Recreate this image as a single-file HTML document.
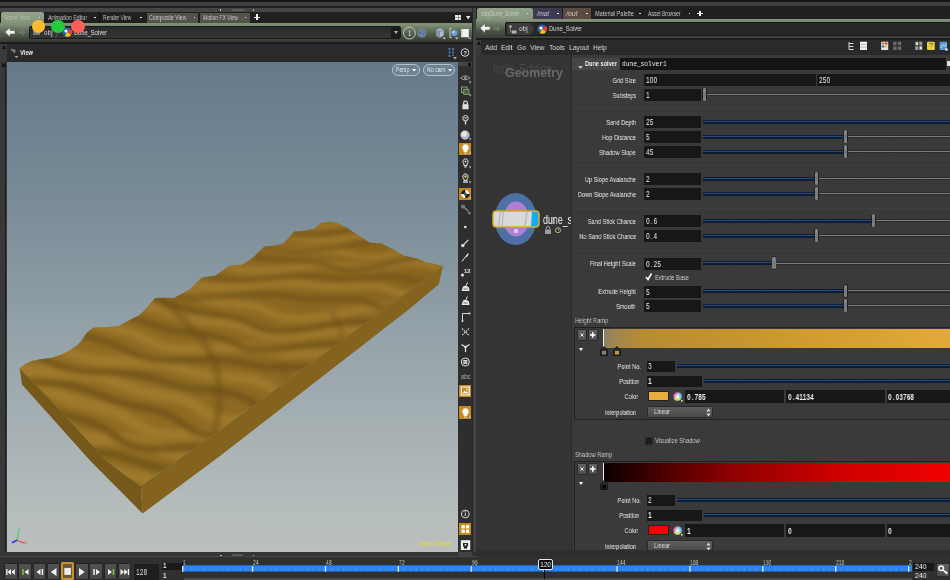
<!DOCTYPE html>
<html><head><meta charset="utf-8"><title>Houdini</title><style>
html,body{margin:0;padding:0;background:#2b2b2b;}
body{width:950px;height:580px;position:relative;overflow:hidden;font-family:"Liberation Sans",sans-serif;}
div{position:absolute;box-sizing:border-box;}
.t{position:absolute;white-space:nowrap;display:block;will-change:transform;}
svg{position:absolute;overflow:visible;}
</style></head><body>
<div style="left:0px;top:0px;width:950px;height:1.5px;background:#161616"></div>
<div style="left:0px;top:1.5px;width:950px;height:4px;background:#3e3e3e"></div>
<div style="left:0px;top:5.5px;width:950px;height:2px;background:#202020"></div>
<div style="left:0px;top:7.5px;width:472px;height:4px;background:#454545"></div>
<div style="left:0px;top:12px;width:472px;height:11px;background:#202020"></div>
<div style="left:1px;top:12px;width:42.5px;height:12px;background:linear-gradient(#95a48d,#82937a);border-radius:2px 2px 0 0"></div>
<span class="t" style="left:4.3px;transform-origin:0 50%;top:12.55px;font:normal 7.5px/9.5px 'Liberation Sans',sans-serif;color:#b4c0ae;transform:scaleX(0.659);">Scene View</span>
<div style="left:38.8px;top:16.6px;width:1.6px;height:1.6px;background:#e4e4e4"></div>
<span class="t" style="left:47.6px;transform-origin:0 50%;top:12.55px;font:normal 7.5px/9.5px 'Liberation Sans',sans-serif;color:#c4c4c4;transform:scaleX(0.711);">Animation Editor</span>
<div style="left:94.3px;top:16.6px;width:1.6px;height:1.6px;background:#e4e4e4"></div>
<div style="left:99px;top:12px;width:1px;height:11px;background:#0e0e0e"></div>
<span class="t" style="left:103.3px;transform-origin:0 50%;top:12.55px;font:normal 7.5px/9.5px 'Liberation Sans',sans-serif;color:#c4c4c4;transform:scaleX(0.657);">Render View</span>
<div style="left:140px;top:16.6px;width:1.6px;height:1.6px;background:#e4e4e4"></div>
<div style="left:146.8px;top:13px;width:51.4px;height:10px;background:#55524a"></div>
<span class="t" style="left:149.2px;transform-origin:0 50%;top:12.55px;font:normal 7.5px/9.5px 'Liberation Sans',sans-serif;color:#c9c9c4;transform:scaleX(0.692);">Composite View</span>
<div style="left:193.5px;top:16.6px;width:1.6px;height:1.6px;background:#e4e4e4"></div>
<div style="left:200px;top:13px;width:50px;height:10px;background:#55524a"></div>
<span class="t" style="left:202.5px;transform-origin:0 50%;top:12.55px;font:normal 7.5px/9.5px 'Liberation Sans',sans-serif;color:#c9c9c4;transform:scaleX(0.664);">Motion FX View</span>
<div style="left:244.7px;top:16.6px;width:1.6px;height:1.6px;background:#e4e4e4"></div>
<div style="left:254.4px;top:16.5px;width:5.6px;height:1.5px;background:#f2f2f2"></div>
<div style="left:256.45px;top:14.45px;width:1.5px;height:5.6px;background:#f2f2f2"></div>
<div style="left:232px;top:8.5px;width:11.5px;height:2px;background:#5a5a5a"></div>
<div style="left:219.5px;top:9px;width:1.5px;height:1.5px;background:#bbb"></div>
<div style="left:252.5px;top:9px;width:1.5px;height:1.5px;background:#bbb"></div>
<div style="left:455.3px;top:15px;width:5.5px;height:5.2px;background:#ececec"></div>
<div style="left:457.8px;top:15px;width:0.6px;height:5.2px;background:#999"></div>
<div style="left:455.3px;top:17.3px;width:5.5px;height:0.6px;background:#999"></div>
<svg style="left:465.800px;top:16px" width="4.400" height="3.400"><path d="M0 0H4.400L2.200 3.400Z" fill="#ececec"/></svg>
<div style="left:0px;top:23px;width:472px;height:3px;background:#7f9077"></div>
<div style="left:0px;top:25px;width:472px;height:17px;background:linear-gradient(#7c8d74,#566351 45%,#33392f)"></div>
<div style="left:29px;top:26px;width:372px;height:13px;background:linear-gradient(#2a2a2a,#363636);border:1px solid #1a1a1a;border-radius:2px"></div>
<div style="left:391px;top:27px;width:9px;height:11px;background:#1b1b1b"></div>
<svg style="left:394px;top:30.500px" width="4" height="3"><path d="M0 0H4L2 3Z" fill="#bbb"/></svg>
<svg style="left:4px;top:27px" width="12" height="11"><path d="M1 5L6 0.5V3.5H11V7H6V10Z" fill="#f2f2f2" stroke="#555" stroke-width=".5"/></svg>
<svg style="left:17px;top:28px" width="10" height="9"><path d="M9 4.5L5 1V3.3H1V5.8H5V8Z" fill="#6a7764"/></svg>
<div style="left:33px;top:29px;width:7px;height:6px;background:#9a9a9a;opacity:.7"></div>
<span class="t" style="left:44.3px;transform-origin:0 50%;top:27.799999999999997px;font:normal 8px/10px 'Liberation Sans',sans-serif;color:#d0d0d0;transform:scaleX(0.796);">obj</span>
<div style="left:57px;top:27px;width:1px;height:11px;background:#555;transform:skewX(-20deg)"></div>
<svg style="left:62px;top:27px" width="10" height="10"><circle cx="5" cy="5" r="4.6" fill="#2b5fa8"/><path d="M5 5L9 2A4.6 4.6 0 0 1 9 8Z" fill="#e8402a"/><path d="M5 5L9 8A4.6 4.6 0 0 1 3 9Z" fill="#f5c518"/><circle cx="4" cy="4" r="1.6" fill="#fff"/></svg>
<span class="t" style="left:73.5px;transform-origin:0 50%;top:27.799999999999997px;font:normal 8px/10px 'Liberation Sans',sans-serif;color:#e0e0e0;transform:scaleX(0.714);">Dune_Solver</span>
<svg style="left:400px;top:25px" width="72" height="16"><circle cx="9.400" cy="8.100" r="5.900" fill="none" stroke="#c3cbbd" stroke-width="1"/><path d="M8.600 6.600L9.700 5.600V10.600M8.500 10.600H10.900" stroke="#c3cbbd" stroke-width=".9" fill="none"/><circle cx="21.900" cy="8.200" r="4" fill="#58748f" stroke="#7893ad" stroke-width=".9"/><path d="M20.600 7A1.300 1.300 0 0 1 23.100 7.300L20.700 10.200H23.300" stroke="#7f9bb6" stroke-width=".8" fill="none"/><path d="M36 4.500L40.500 3.500L43.700 5V10.500L39.500 13L36 10.500Z" fill="#aebdcc"/><path d="M36 4.500L39.500 6.500L43.700 5M39.500 6.500V13" stroke="#5e6e7e" stroke-width=".7" fill="none"/><path d="M36 4.500L39.500 6.500V13L36 10.500Z" fill="#8597a8"/><path d="M42.500 12.500H46L44.250 14.500Z" fill="#c8c8c8"/><path d="M52 3.500H50V12.500H52" stroke="#b9c4a6" stroke-width="1.100" fill="none"/><circle cx="54.300" cy="8" r="3.100" fill="#6f9bd4"/><circle cx="53.500" cy="7" r="1.200" fill="#b9d4f4"/><path d="M55 12.500H58.500L56.750 14.500Z" fill="#c8c8c8"/><rect x="61.300" y="4" width="7.500" height="8.200" fill="#f2f2ee"/><rect x="61.300" y="4" width="1.200" height="8.200" fill="#cfcfc8"/><path d="M67.500 12.500H70.500L70.500 14.500Z" fill="#c8c8c8"/></svg>
<div style="left:0px;top:41.5px;width:472px;height:2px;background:#1c1c1c"></div>
<div style="left:0px;top:43.5px;width:472px;height:18px;background:#2a2a2a"></div>
<div style="left:0px;top:44px;width:7px;height:18px;background:#3a3a3a"></div>
<svg style="left:2px;top:45px" width="4" height="4"><path d="M0 4L2 0L4 4Z" fill="#111"/></svg>
<span class="t" style="left:20px;transform-origin:0 50%;top:48.3px;font:bold 8px/10px 'Liberation Sans',sans-serif;color:#f0f0f0;transform:scaleX(0.719);">View</span>
<svg style="left:10px;top:48px" width="9" height="10"><path d="M1 1L5 5M3 1.5L6 3" stroke="#7c8a94" stroke-width="1.2"/><path d="M4.5 8H8.5L6.5 10Z" fill="#aaa"/></svg>
<svg style="left:446px;top:46px" width="26" height="14"><path d="M3.5 2V12M7 2V10" stroke="#4f86c9" stroke-width="1.6" stroke-dasharray="2.2 1.2"/><path d="M7 11H11L9 13.5Z" fill="#aaa"/><circle cx="19" cy="6.5" r="3.8" fill="#1c1c1c" stroke="#ddd" stroke-width="1"/><text x="19" y="8.8" font-size="6" font-weight="bold" fill="#eee" text-anchor="middle" font-family="Liberation Sans">?</text></svg>
<div style="left:0px;top:61.5px;width:6.5px;height:491px;background:#383838"></div>
<div style="left:4.6px;top:61.5px;width:1.9px;height:490.5px;background:#1e1e1e"></div>
<svg style="left:2px;top:63px" width="4" height="5"><path d="M0 0L4 2.5L0 5Z" fill="#111"/></svg>
<div style="left:6.5px;top:61.5px;width:451.5px;height:490.5px;background:linear-gradient(#64798a 0%,#7b8d99 30%,#98a5ab 60%,#b4bcbc 90%,#babfbe 100%)"></div>
<div style="left:458px;top:62px;width:14px;height:491px;background:#2e2e2e"></div>
<div style="left:458px;top:62px;width:14px;height:4px;background:#444"></div>
<div style="left:468px;top:63px;width:3px;height:3px;background:#111"></div>
<div style="left:392px;top:64px;width:27.7px;height:12px;border:1px solid #b4c2c9;border-radius:6px;background:rgba(130,150,165,.3)"></div>
<span class="t" style="left:396.3px;transform-origin:0 50%;top:65.0px;font:normal 8px/10px 'Liberation Sans',sans-serif;color:#e6edf0;transform:scaleX(0.636);">Persp</span>
<svg style="left:411.9px;top:69.2px" width="4.200" height="2.600"><path d="M0 0H4.200L2.100 2.600Z" fill="#fff"/></svg>
<div style="left:423px;top:64px;width:32.4px;height:12px;border:1px solid #b4c2c9;border-radius:6px;background:rgba(130,150,165,.3)"></div>
<span class="t" style="left:427.3px;transform-origin:0 50%;top:65.0px;font:normal 8px/10px 'Liberation Sans',sans-serif;color:#e6edf0;transform:scaleX(0.653);">No cam</span>
<svg style="left:447.59999999999997px;top:69.2px" width="4.200" height="2.600"><path d="M0 0H4.200L2.100 2.600Z" fill="#fff"/></svg>
<svg style="left:0;top:0" width="475" height="560" viewBox="0 0 475 560">
<defs><clipPath id="ctop"><polygon points="19.7,368.6 25.0,364.0 32.4,360.7 42.0,359.0 51.0,358.0 60.0,355.0 66.0,352.4 77.0,345.5 82.0,340.0 86.9,332.4 93.8,327.6 107.6,326.9 118.6,326.2 128.3,320.7 139.3,315.2 146.2,308.3 155.2,297.9 162.8,297.7 173.8,297.9 183.4,293.1 190.0,289.2 201.8,277.4 215.3,275.8 229.5,265.5 242.1,264.7 253.2,257.6 264.2,246.6 273.7,245.8 283.2,243.4 294.2,231.6 305.3,230.8 314.7,228.4 321.0,222.9 330.5,221.6 336.9,222.9 347.2,228.1 359.3,235.9 369.7,242.8 381.7,243.6 393.8,249.7 404.1,255.7 416.2,258.3 426.6,262.6 433.4,263.8 442.9,266.0 219.3,430.5 193.4,449.0 159.0,473.0 140.9,486.0 124.5,474.8 107.0,461.0 90.0,443.0 50.0,399.5"/></clipPath>
<filter id="bl" x="-10%" y="-10%" width="120%" height="120%"><feGaussianBlur stdDeviation="2.6"/></filter>
<linearGradient id="gtopm" gradientUnits="userSpaceOnUse" x1="60" y1="420" x2="400" y2="250"><stop offset="0" stop-color="#916d25"/><stop offset="1" stop-color="#886520"/></linearGradient><linearGradient id="gside" x1="0" y1="0" x2="1" y2="0"><stop offset="0" stop-color="#7d5e1e"/><stop offset="1" stop-color="#8c6b22"/></linearGradient>
</defs>
<polygon points="19.7,368.6 25.0,364.0 32.4,360.7 42.0,359.0 51.0,358.0 60.0,355.0 66.0,352.4 77.0,345.5 82.0,340.0 86.9,332.4 93.8,327.6 107.6,326.9 118.6,326.2 128.3,320.7 139.3,315.2 146.2,308.3 155.2,297.9 162.8,297.7 173.8,297.9 183.4,293.1 190.0,289.2 201.8,277.4 215.3,275.8 229.5,265.5 242.1,264.7 253.2,257.6 264.2,246.6 273.7,245.8 283.2,243.4 294.2,231.6 305.3,230.8 314.7,228.4 321.0,222.9 330.5,221.6 336.9,222.9 347.2,228.1 359.3,235.9 369.7,242.8 381.7,243.6 393.8,249.7 404.1,255.7 416.2,258.3 426.6,262.6 433.4,263.8 442.9,266.0 219.3,430.5 193.4,449.0 159.0,473.0 140.9,486.0 124.5,474.8 107.0,461.0 90.0,443.0 50.0,399.5" fill="url(#gtopm)"/>
<g clip-path="url(#ctop)"><g filter="url(#bl)"><path d="M-69.9 401.6 L-60.7 406.9 L-52.3 412.7 L-43.8 418.3 L-34.5 423.4 L-24.1 427.9 L-12.8 431.8 L-1.4 435.5 L9.4 439.5 L18.8 444.0 L27.1 449.2 L34.6 454.8 L42.3 460.2 L51.3 464.8 L62.1 468.2 L74.7 470.3 L88.5 471.3 L102.7 472.0 L116.0 473.0 L128.1 474.8 L138.7 477.4 L148.4 480.5 L158.1 483.6 L168.4 486.2" stroke="#a57f31" stroke-width="12.0" fill="none" opacity=".7"/><path d="M-89.9 410.8 L-80.6 416.4 L-72.2 422.4 L-63.7 428.3 L-54.4 433.7 L-44.0 438.4 L-32.7 442.5 L-21.2 446.4 L-10.5 450.6 L-1.0 455.4 L7.3 460.9 L14.8 466.7 L22.6 472.4 L31.5 477.2 L42.3 480.8 L55.0 483.1 L68.8 484.4 L83.0 485.3 L96.4 486.6 L108.4 488.6 L119.1 491.4 L128.8 494.8 L138.4 498.2 L148.8 500.9" stroke="#694c13" stroke-width="8.0" fill="none" opacity=".68"/><path d="M-39.3 387.3 L-30.3 392.4 L-20.1 396.9 L-9.0 400.8 L2.3 404.5 L13.1 408.3 L22.7 412.7 L31.1 417.6 L38.7 422.9 L46.6 428.0 L55.7 432.3 L66.7 435.5 L79.5 437.4 L93.5 438.4 L107.8 439.0 L121.3 439.8 L133.5 441.4 L144.1 443.9 L153.8 446.9 L163.3 450.0 L173.3 452.6 L184.4 454.3 L196.4 455.2 L208.5 455.9" stroke="#a57f31" stroke-width="12.0" fill="none" opacity=".7"/><path d="M-59.2 396.6 L-50.2 401.9 L-40.0 406.7 L-28.9 410.8 L-17.5 414.7 L-6.8 418.8 L2.8 423.4 L11.2 428.6 L18.9 434.1 L26.8 439.4 L36.0 444.0 L46.9 447.4 L59.7 449.6 L73.7 450.8 L88.1 451.6 L101.6 452.7 L113.8 454.5 L124.5 457.2 L134.1 460.5 L143.6 463.8 L153.7 466.6 L164.8 468.6 L176.8 469.8 L188.9 470.7" stroke="#694c13" stroke-width="8.0" fill="none" opacity=".68"/><path d="M-9.5 373.5 L5.1 375.5 L18.5 378.0 L30.0 381.3 L39.7 385.3 L48.4 389.7 L57.0 394.2 L66.2 398.2 L76.4 401.6 L87.5 404.4 L98.7 407.0 L109.2 409.9 L118.5 413.5 L126.4 417.8 L133.5 422.5 L140.7 427.2 L149.0 431.1 L159.2 433.7 L171.4 434.8 L185.0 434.7 L199.1 434.1 L212.7 433.7 L225.1 433.9 L236.1 435.1" stroke="#a57f31" stroke-width="11.7" fill="none" opacity=".7"/><path d="M-29.4 382.7 L-14.8 385.0 L-1.4 387.8 L10.1 391.3 L19.9 395.5 L28.6 400.2 L37.2 404.9 L46.4 409.2 L56.6 412.8 L67.7 415.8 L78.9 418.7 L89.4 421.8 L98.7 425.6 L106.6 430.1 L113.7 435.2 L121.0 440.1 L129.3 444.2 L139.5 447.0 L151.7 448.4 L165.3 448.6 L179.5 448.2 L193.1 448.0 L205.5 448.5 L216.5 449.8" stroke="#694c13" stroke-width="7.8" fill="none" opacity=".68"/><path d="M9.5 364.7 L20.8 368.1 L34.1 370.4 L48.9 371.8 L64.2 372.7 L78.8 373.7 L92.0 375.3 L103.3 377.8 L113.0 381.0 L121.9 384.6 L131.0 388.0 L140.7 390.9 L151.4 393.2 L162.4 395.1 L173.2 397.1 L182.9 399.7 L191.1 403.1 L198.0 407.4 L204.5 412.0 L211.4 416.1 L219.9 419.2 L230.5 420.7 L243.0 420.7 L256.7 419.6" stroke="#a57f31" stroke-width="11.1" fill="none" opacity=".7"/><path d="M-10.5 373.9 L0.9 377.6 L14.2 380.1 L29.0 381.7 L44.3 382.9 L59.0 384.2 L72.1 386.0 L83.4 388.7 L93.2 392.2 L102.1 396.0 L111.2 399.7 L121.0 402.8 L131.6 405.4 L142.7 407.5 L153.5 409.7 L163.2 412.5 L171.4 416.2 L178.4 420.7 L184.8 425.5 L191.8 430.0 L200.3 433.3 L210.8 435.0 L223.3 435.2 L237.1 434.3" stroke="#694c13" stroke-width="7.4" fill="none" opacity=".68"/><path d="M53.6 344.2 L61.8 348.5 L70.1 352.8 L79.5 356.4 L90.6 359.1 L103.5 360.7 L117.7 361.4 L132.3 361.7 L146.2 362.3 L158.5 363.4 L169.2 365.5 L178.6 368.1 L187.6 371.0 L197.0 373.5 L207.3 375.3 L218.5 376.4 L230.1 377.2 L241.4 378.0 L251.4 379.6 L259.8 382.1 L267.0 385.5 L273.8 389.2 L281.1 392.5 L289.8 394.6" stroke="#a57f31" stroke-width="10.4" fill="none" opacity=".7"/><path d="M33.7 353.4 L41.9 358.0 L50.2 362.5 L59.6 366.4 L70.7 369.3 L83.6 371.2 L97.9 372.1 L112.5 372.7 L126.4 373.4 L138.7 374.9 L149.4 377.1 L158.9 380.0 L167.8 383.1 L177.2 385.9 L187.5 387.9 L198.8 389.3 L210.4 390.3 L221.7 391.4 L231.7 393.2 L240.2 395.9 L247.4 399.6 L254.1 403.5 L261.4 407.0 L270.2 409.4" stroke="#694c13" stroke-width="6.9" fill="none" opacity=".68"/><path d="M95.9 324.5 L107.1 326.9 L118.0 329.3 L128.0 332.1 L136.8 335.3 L144.7 339.0 L152.5 342.7 L161.1 345.9 L171.4 348.0 L183.7 348.9 L197.5 348.8 L211.9 348.1 L226.0 347.4 L238.8 347.3 L250.0 348.0 L259.9 349.5 L269.1 351.2 L278.7 352.8 L289.0 353.6 L300.4 353.6 L312.2 353.2 L323.8 352.8 L334.1 353.1 L342.9 354.6" stroke="#a57f31" stroke-width="9.6" fill="none" opacity=".7"/><path d="M76.0 333.8 L87.1 336.4 L98.1 339.1 L108.1 342.1 L116.9 345.6 L124.8 349.5 L132.6 353.4 L141.3 356.8 L151.6 359.2 L163.9 360.4 L177.7 360.5 L192.2 360.0 L206.2 359.5 L219.1 359.6 L230.3 360.6 L240.1 362.3 L249.4 364.3 L259.0 366.1 L269.4 367.2 L280.7 367.4 L292.6 367.2 L304.1 367.1 L314.5 367.7 L323.3 369.3" stroke="#694c13" stroke-width="6.4" fill="none" opacity=".68"/><path d="M137.8 305.0 L149.0 306.9 L158.5 309.5 L166.9 312.6 L175.2 315.6 L184.2 318.2 L194.4 320.1 L205.5 321.4 L216.8 322.4 L227.5 323.7 L237.1 325.5 L245.3 328.0 L252.6 331.0 L260.0 333.9 L268.5 336.2 L278.7 337.2 L290.8 336.8 L304.3 335.4 L318.2 333.5 L331.6 331.7 L343.7 330.6 L354.4 330.5 L364.1 330.9 L373.6 331.4" stroke="#a57f31" stroke-width="8.9" fill="none" opacity=".7"/><path d="M117.9 314.3 L129.1 316.4 L138.6 319.3 L147.0 322.5 L155.3 325.8 L164.4 328.6 L174.5 330.8 L185.6 332.3 L197.0 333.6 L207.7 335.1 L217.3 337.1 L225.5 339.9 L232.9 343.1 L240.3 346.3 L248.8 348.8 L259.0 350.0 L271.1 349.9 L284.6 348.7 L298.5 347.0 L311.9 345.5 L324.1 344.7 L334.8 344.8 L344.5 345.5 L354.0 346.2" stroke="#694c13" stroke-width="6.0" fill="none" opacity=".68"/><path d="M171.8 289.3 L181.9 291.3 L190.5 293.9 L198.5 296.7 L207.0 299.3 L216.3 301.3 L226.5 302.8 L237.0 304.0 L247.1 305.3 L256.1 307.2 L263.9 309.7 L270.8 312.6 L277.7 315.6 L285.7 317.9 L295.5 318.9 L307.5 318.4 L321.2 316.6 L335.7 314.1 L350.1 311.4 L363.3 309.4 L375.1 308.2 L385.7 307.7 L395.8 307.4 L406.1 306.9" stroke="#a57f31" stroke-width="8.3" fill="none" opacity=".7"/><path d="M151.9 298.5 L162.0 300.7 L170.6 303.6 L178.7 306.7 L187.1 309.5 L196.4 311.8 L206.6 313.5 L217.2 314.9 L227.3 316.5 L236.3 318.6 L244.1 321.3 L251.1 324.5 L258.0 327.7 L266.0 330.2 L275.8 331.5 L287.8 331.3 L301.5 329.7 L316.1 327.4 L330.4 325.0 L343.7 323.2 L355.5 322.2 L366.1 322.0 L376.2 322.0 L386.5 321.7" stroke="#694c13" stroke-width="5.6" fill="none" opacity=".68"/><path d="M186.5 282.4 L195.0 285.0 L204.9 286.8 L216.7 287.6 L230.3 287.2 L245.2 286.1 L260.3 284.6 L274.4 283.4 L286.8 282.9 L297.5 283.3 L306.9 284.3 L315.8 285.6 L325.1 286.5 L335.3 286.8 L346.1 286.5 L357.2 286.0 L367.6 285.8 L376.6 286.4 L384.2 287.9 L390.6 290.2 L396.9 292.6 L404.0 294.3 L412.9 294.8 L423.8 293.5" stroke="#a57f31" stroke-width="7.7" fill="none" opacity=".7"/><path d="M166.5 291.7 L175.1 294.5 L185.0 296.6 L196.8 297.6 L210.5 297.5 L225.4 296.5 L240.4 295.3 L254.5 294.3 L267.0 294.1 L277.7 294.7 L287.1 296.0 L296.1 297.5 L305.4 298.6 L315.5 299.1 L326.4 299.1 L337.5 298.8 L347.9 298.9 L356.9 299.7 L364.5 301.5 L371.0 304.0 L377.2 306.6 L384.4 308.6 L393.3 309.3 L404.2 308.3" stroke="#694c13" stroke-width="5.1" fill="none" opacity=".68"/><path d="M223.7 265.1 L231.8 267.4 L240.7 269.3 L251.1 270.3 L263.3 270.3 L277.1 269.3 L291.5 267.7 L305.6 266.2 L318.4 265.1 L329.5 264.9 L339.0 265.4 L347.9 266.3 L356.8 267.0 L366.6 267.1 L377.4 266.5 L388.9 265.3 L400.2 264.1 L410.6 263.4 L419.5 263.5 L427.0 264.6 L433.7 266.2 L440.6 267.7 L448.7 268.2 L458.7 267.3" stroke="#a57f31" stroke-width="7.0" fill="none" opacity=".7"/><path d="M203.8 274.4 L211.9 276.9 L220.8 279.0 L231.2 280.3 L243.4 280.5 L257.2 279.8 L271.7 278.4 L285.8 277.1 L298.6 276.3 L309.7 276.3 L319.3 277.0 L328.1 278.2 L337.1 279.1 L346.9 279.5 L357.7 279.1 L369.1 278.2 L380.5 277.2 L390.9 276.7 L399.8 277.1 L407.3 278.4 L414.1 280.3 L421.0 282.0 L429.1 282.7 L439.1 282.0" stroke="#694c13" stroke-width="4.7" fill="none" opacity=".68"/><path d="M266.9 245.0 L274.8 246.9 L283.0 248.6 L292.0 249.8 L302.1 250.3 L312.7 250.5 L323.2 250.6 L332.9 251.1 L341.2 252.2 L348.6 253.9 L355.6 255.6 L363.5 256.9 L373.0 257.1 L384.5 255.9 L397.8 253.5 L412.1 250.2 L426.4 246.7 L439.6 243.7 L451.4 241.5 L461.8 240.1 L471.5 239.1 L481.3 238.0 L491.9 236.2 L503.3 233.6" stroke="#a57f31" stroke-width="6.4" fill="none" opacity=".7"/><path d="M247.0 254.3 L254.9 256.4 L263.1 258.3 L272.1 259.8 L282.2 260.6 L292.9 261.0 L303.4 261.3 L313.0 262.1 L321.4 263.4 L328.8 265.3 L335.9 267.3 L343.7 268.8 L353.2 269.2 L364.7 268.3 L378.1 266.1 L392.4 263.0 L406.7 259.8 L419.9 257.0 L431.7 255.1 L442.2 253.9 L451.9 253.2 L461.7 252.3 L472.3 250.7 L483.7 248.4" stroke="#694c13" stroke-width="4.3" fill="none" opacity=".68"/><path d="M285.9 236.3 L294.0 237.8 L301.8 239.4 L310.2 240.6 L320.2 241.0 L332.2 240.2 L346.0 238.3 L361.0 235.6 L375.8 232.7 L389.6 230.2 L401.8 228.4 L412.2 227.5 L421.6 227.2 L430.7 227.0 L440.3 226.3 L450.7 225.0 L461.7 223.2 L472.7 221.3 L482.8 219.8 L491.5 219.3 L498.6 219.8 L504.7 221.0 L510.8 222.1 L518.0 222.5" stroke="#a57f31" stroke-width="6.0" fill="none" opacity=".7"/><path d="M265.9 245.5 L274.0 247.3 L281.9 249.1 L290.3 250.6 L300.3 251.2 L312.4 250.7 L326.2 249.0 L341.1 246.6 L356.0 243.9 L369.8 241.6 L382.0 240.1 L392.5 239.4 L401.8 239.3 L410.9 239.3 L420.5 238.9 L431.0 237.9 L442.0 236.3 L453.0 234.6 L463.2 233.4 L471.8 233.1 L479.0 233.8 L485.1 235.3 L491.2 236.7 L498.4 237.3" stroke="#694c13" stroke-width="4.0" fill="none" opacity=".68"/><path d="M309.8 225.1 L319.3 225.7 L330.5 225.3 L343.5 224.0 L357.6 221.8 L371.8 219.4 L385.2 217.2 L397.0 215.7 L407.1 215.0 L416.0 214.9 L424.6 215.0 L433.7 214.6 L443.9 213.5 L454.9 211.7 L466.4 209.6 L477.4 207.6 L487.1 206.3 L495.4 205.9 L502.5 206.2 L509.3 206.8 L516.7 206.8 L525.8 205.6 L536.7 203.0 L549.2 199.0" stroke="#a57f31" stroke-width="6.0" fill="none" opacity=".7"/><path d="M289.9 234.4 L299.4 235.2 L310.6 235.1 L323.6 233.9 L337.7 232.0 L352.0 229.8 L365.4 227.9 L377.2 226.7 L387.3 226.2 L396.2 226.4 L404.8 226.6 L414.0 226.5 L424.1 225.7 L435.2 224.1 L446.7 222.2 L457.6 220.5 L467.4 219.4 L475.7 219.2 L482.8 219.8 L489.6 220.6 L497.1 220.9 L506.1 219.9 L517.1 217.5 L529.6 213.8" stroke="#694c13" stroke-width="4.0" fill="none" opacity=".68"/><path d="M158 298Q196 326 212 356Q226 392 214 432" stroke="#6a4d14" stroke-width="8" fill="none" opacity="0.42"/><path d="M331 311Q340 322 342 336" stroke="#6a4d14" stroke-width="5" fill="none" opacity="0.35"/><path d="M278 362Q286 370 288 382" stroke="#6a4d14" stroke-width="5" fill="none" opacity="0.3"/></g></g>
<polygon points="19.7,368.6 50,399.5 90,443 107,461 124.5,474.8 140.9,486 142.6,513.6 90,460.5 22,384.5" fill="#76581a"/>
<polygon points="140.9,486 159,473 193.4,449 219.3,430.5 442.9,266 438.8,284.3 409.3,309.1 220,456 142.6,513.6" fill="#84631e"/>
<polygon points="19.7,368.6 25.0,364.0 32.4,360.7 42.0,359.0 51.0,358.0 60.0,355.0 66.0,352.4 77.0,345.5 82.0,340.0 86.9,332.4 93.8,327.6 107.6,326.9 118.6,326.2 128.3,320.7 139.3,315.2 146.2,308.3 155.2,297.9 162.8,297.7 173.8,297.9 183.4,293.1 190.0,289.2 201.8,277.4 215.3,275.8 229.5,265.5 242.1,264.7 253.2,257.6 264.2,246.6 273.7,245.8 283.2,243.4 294.2,231.6 305.3,230.8 314.7,228.4 321.0,222.9 330.5,221.6 336.9,222.9 347.2,228.1 359.3,235.9 369.7,242.8 381.7,243.6 393.8,249.7 404.1,255.7 416.2,258.3 426.6,262.6 433.4,263.8 442.9,266.0 442.5,268 19.7,370" fill="none"/>
</svg>
<svg style="left:8px;top:526px" width="24" height="24"><path d="M9 14.200L10.800 4.500" stroke="#3fd060" stroke-width="1.100"/><path d="M9 14.200L16 17" stroke="#e04545" stroke-width="1.100"/><path d="M9 14.200L4 16.800" stroke="#2a3ce8" stroke-width="1.800"/><path d="M10.300 2L11.300 3.300L12.300 2M11.300 3.300V4.600" stroke="#3fd060" stroke-width=".6" fill="none"/><path d="M16.500 15.500L18.500 18M18.500 15.500L16.500 18" stroke="#e04545" stroke-width=".6"/></svg>
<span class="t" style="left:419px;transform-origin:0 50%;top:538.75px;font:normal 7.5px/9.5px 'Liberation Sans',sans-serif;color:#e2de36;transform:scaleX(0.787);">Indie Edition</span>
<svg style="left:459px;top:71.5px" width="13" height="12" viewBox="0 0 13 12"><path d="M1.500 6Q6.300 1.500 11 6Q6.300 9.500 1.500 6Z" fill="none" stroke="#9c9c9c" stroke-width="1"/><circle cx="6.300" cy="5.800" r="1.400" fill="#9c9c9c"/><path d="M10.500 8.500L12.300 10L10.500 11.500Z" fill="#bbb"/></svg>
<svg style="left:459px;top:85.0px" width="13" height="12" viewBox="0 0 13 12"><rect x="2.500" y="2" width="5.500" height="5.500" fill="none" stroke="#7ea864" stroke-width="1"/><rect x="4.800" y="4.300" width="5" height="5" fill="#4a5a40" stroke="#7ea864" stroke-width="1"/><path d="M10.500 8.500L12.300 10L10.500 11.500Z" fill="#bbb"/></svg>
<svg style="left:459px;top:99.3px" width="13" height="12" viewBox="0 0 13 12"><path d="M4.700 5.500V3.800A1.800 1.800 0 0 1 8.300 3.800V5.500" stroke="#f0f0f0" stroke-width="1.100" fill="none"/><rect x="3.500" y="5.300" width="6" height="5" rx=".5" fill="#f0f0f0"/><path d="M3.500 7.200H9.500M3.500 8.800H9.500" stroke="#bbb" stroke-width=".5"/></svg>
<svg style="left:459px;top:114.0px" width="13" height="12" viewBox="0 0 13 12"><circle cx="6.500" cy="4.300" r="2.700" fill="none" stroke="#e6e6e6" stroke-width="1"/><path d="M5.300 3.100L7.700 5.500M7.700 3.100L5.300 5.500" stroke="#e6e6e6" stroke-width=".7"/><path d="M6.500 7V10.500" stroke="#ddd" stroke-width="1.400"/></svg>
<svg style="left:459px;top:129.0px" width="13" height="12" viewBox="0 0 13 12"><circle cx="6" cy="6" r="4.200" fill="#aab4be"/><circle cx="5.300" cy="5.200" r="2.600" fill="#e4eaf0"/><circle cx="6" cy="6" r="4.200" fill="none" stroke="#e0e0e0" stroke-width=".7"/><path d="M10.500 8.500L12.300 10L10.500 11.500Z" fill="#bbb"/></svg>
<div style="left:459.4px;top:142.60000000000002px;width:12px;height:12.4px;background:#c6881d"></div>
<svg style="left:459px;top:142.8px" width="13" height="12" viewBox="0 0 13 12"><path d="M6.500 1.300A3.300 3.300 0 0 1 8.400 7.300V9H4.600V7.300A3.300 3.300 0 0 1 6.500 1.300Z" fill="#f6f6f6"/><rect x="5.200" y="9.500" width="2.600" height="1.200" fill="#ddd"/><path d="M10.500 8.500L12.300 10L10.500 11.500Z" fill="#bbb"/></svg>
<svg style="left:459px;top:157.0px" width="13" height="12" viewBox="0 0 13 12"><path d="M6.500 1.800A2.900 2.900 0 0 1 8 7V8.600H5V7A2.900 2.900 0 0 1 6.500 1.800Z" fill="none" stroke="#e6e6e6" stroke-width="1"/><circle cx="6.500" cy="4.500" r=".9" fill="#e6e6e6"/><rect x="5.200" y="9.300" width="2.600" height="1.200" fill="#ccc"/><path d="M10.500 8.500L12.300 10L10.500 11.500Z" fill="#bbb"/></svg>
<svg style="left:459px;top:171.5px" width="13" height="12" viewBox="0 0 13 12"><path d="M6.500 1.800A2.900 2.900 0 0 1 8 7V8.600H5V7A2.900 2.900 0 0 1 6.500 1.800Z" fill="none" stroke="#e6e6e6" stroke-width="1"/><circle cx="6.500" cy="4.500" r="1.200" fill="#d8c070"/><rect x="4" y="9.300" width="5" height="1.400" fill="#ccc"/><path d="M10.500 8.500L12.300 10L10.500 11.500Z" fill="#bbb"/></svg>
<div style="left:459.4px;top:187.8px;width:12px;height:12.4px;background:#c6881d"></div>
<svg style="left:459px;top:188.0px" width="13" height="12" viewBox="0 0 13 12"><circle cx="6.300" cy="6" r="4.300" fill="#1c1c1c"/><path d="M6.300 1.700A4.300 4.300 0 0 1 10.600 6L6.300 6Z M6.300 10.300A4.300 4.300 0 0 1 2 6L6.300 6Z" fill="#f1f1f1"/><circle cx="6.300" cy="6" r="1.500" fill="#555"/><path d="M10.500 8.500L12.300 10L10.500 11.500Z" fill="#bbb"/></svg>
<svg style="left:459px;top:203.0px" width="13" height="12" viewBox="0 0 13 12"><path d="M2.500 3L6 5L9.500 8.500" stroke="#8c8c8c" stroke-width="1.300" fill="none"/><circle cx="4" cy="3.500" r="1.600" fill="none" stroke="#8c8c8c" stroke-width=".9"/><path d="M8.500 9.500H12L10.250 11.500Z" fill="#aaa"/></svg>
<svg style="left:459px;top:221.4px" width="13" height="12" viewBox="0 0 13 12"><circle cx="6.300" cy="6" r="1.300" fill="#e6e6e6"/></svg>
<svg style="left:459px;top:237.0px" width="13" height="12" viewBox="0 0 13 12"><path d="M3.500 8.800L9.300 2.800" stroke="#e6e6e6" stroke-width="1.100"/><circle cx="3.800" cy="8.600" r="1.700" fill="#e6e6e6"/></svg>
<svg style="left:459px;top:251.0px" width="13" height="12" viewBox="0 0 13 12"><path d="M3 10.500L8.300 3.500" stroke="#e6e6e6" stroke-width="1"/><path d="M6.800 5.500L8.800 2.200L9.800 3L7.800 6.200Z" fill="#e6e6e6"/></svg>
<svg style="left:459px;top:266.0px" width="13" height="12" viewBox="0 0 13 12"><circle cx="3.500" cy="9" r="1.500" fill="#e6e6e6"/><text x="5" y="6.500" font-size="6" font-weight="bold" fill="#e6e6e6" font-family="Liberation Sans" textLength="6.500" lengthAdjust="spacingAndGlyphs">12</text></svg>
<svg style="left:459px;top:280.7px" width="13" height="12" viewBox="0 0 13 12"><path d="M2.500 10L4 5.500L7 4.500L10 6.500L10.500 10Z" fill="#e6e6e6"/><path d="M7 4.500L8.500 1.500" stroke="#e6e6e6" stroke-width="1"/><path d="M4.500 8H8.500" stroke="#555" stroke-width=".8"/></svg>
<svg style="left:459px;top:295.2px" width="13" height="12" viewBox="0 0 13 12"><path d="M2.500 10L4 5.500L7 4.500L10 6.500L10.500 10Z" fill="#e6e6e6"/><path d="M7 4.500L8.500 1.500" stroke="#e6e6e6" stroke-width="1"/><path d="M4.500 8H8.500" stroke="#555" stroke-width=".8"/></svg>
<svg style="left:459px;top:310.5px" width="13" height="12" viewBox="0 0 13 12"><path d="M3.500 10V2.500H10.500" stroke="#d4d4d4" stroke-width="1" fill="none"/><circle cx="3.500" cy="10" r="1" fill="#e6e6e6"/><circle cx="10.500" cy="2.500" r="1" fill="#e6e6e6"/></svg>
<svg style="left:459px;top:325.6px" width="13" height="12" viewBox="0 0 13 12"><path d="M3 2.500L10 9.500M10 2.500L3 9.500" stroke="#d4d4d4" stroke-width="1.200" stroke-dasharray="1.600 1"/></svg>
<svg style="left:459px;top:340.7px" width="13" height="12" viewBox="0 0 13 12"><path d="M6.500 6L2.500 3.500M6.500 6L10.500 3.500M6.500 6V11" stroke="#e6e6e6" stroke-width="1.200" fill="none"/><circle cx="6.500" cy="6" r="1.200" fill="#e6e6e6"/></svg>
<svg style="left:459px;top:355.8px" width="13" height="12" viewBox="0 0 13 12"><circle cx="6.300" cy="6" r="4" fill="none" stroke="#e6e6e6" stroke-width="1"/><rect x="4.300" y="4" width="4" height="4" fill="#e6e6e6"/><path d="M4.300 5.300H8.300M4.300 6.700H8.300" stroke="#666" stroke-width=".5"/></svg>
<span class="t" style="left:460.8px;transform-origin:0 50%;top:372.0px;font:normal 7px/9px 'Liberation Sans',sans-serif;color:#b4b4b4;transform:scaleX(0.842);">abc</span>
<div style="left:459.4px;top:385.1px;width:12px;height:12.4px;background:#c6881d"></div>
<svg style="left:459px;top:385.3px" width="13" height="12" viewBox="0 0 13 12"><rect x="2.300" y="2" width="8" height="8" fill="none" stroke="#f4f4f4" stroke-width="1.200"/><path d="M3.500 8.500L5.500 5.500L7 7L8 6L9.500 8.500Z" fill="#f4f4f4"/><circle cx="8" cy="4.300" r=".9" fill="#f4f4f4"/></svg>
<div style="left:459.4px;top:406.3px;width:12px;height:12.4px;background:#c6881d"></div>
<svg style="left:459px;top:406.5px" width="13" height="12" viewBox="0 0 13 12"><path d="M6.500 1.300A3.300 3.300 0 0 1 8.400 7.300V9H4.600V7.300A3.300 3.300 0 0 1 6.500 1.300Z" fill="#f6f6f6"/><rect x="5.200" y="9.500" width="2.600" height="1.200" fill="#ddd"/><path d="M10.500 8.500L12.300 10L10.500 11.500Z" fill="#bbb"/></svg>
<svg style="left:459px;top:507.5px" width="13" height="12" viewBox="0 0 13 12"><circle cx="6.300" cy="6" r="3.900" fill="none" stroke="#d8d8d8" stroke-width="1"/><path d="M6.300 5.300V8.300" stroke="#d8d8d8" stroke-width="1.100"/><circle cx="6.300" cy="3.800" r=".7" fill="#d8d8d8"/></svg>
<div style="left:459.4px;top:522.8px;width:12px;height:12.4px;background:#c6881d"></div>
<svg style="left:459px;top:523.0px" width="13" height="12" viewBox="0 0 13 12"><rect x="2.500" y="2.200" width="3.300" height="3.300" fill="#fff"/><rect x="6.900" y="2.200" width="3.300" height="3.300" fill="#fff"/><rect x="2.500" y="6.600" width="3.300" height="3.300" fill="#fff"/><rect x="6.900" y="6.600" width="3.300" height="3.300" fill="#fff"/></svg>
<svg style="left:459px;top:539.0px" width="13" height="12" viewBox="0 0 13 12"><rect x="1.800" y="1.200" width="9.400" height="9.800" fill="#f1f1f1"/><path d="M4 4H9V7.500H7.800L8.300 9.500H4.700L5.200 7.500H4Z" fill="#1c1c1c"/><circle cx="6.500" cy="5.700" r="1" fill="#f1f1f1"/></svg>
<div style="left:472px;top:8px;width:5px;height:548.3px;background:#242424"></div>
<div style="left:473.2px;top:8px;width:2.5px;height:548.3px;background:#424242"></div>
<div style="left:476px;top:8px;width:474px;height:11px;background:#202020"></div>
<div style="left:477px;top:8px;width:55.5px;height:11px;background:linear-gradient(#93a28b,#86967e);border-radius:2px 2px 0 0"></div>
<span class="t" style="left:480.7px;transform-origin:0 50%;top:9.0px;font:normal 7px/9px 'Liberation Sans',sans-serif;color:#c4ceba;transform:scaleX(0.708);font-style:italic;">/obj/Dune_Solver</span>
<div style="left:526.5px;top:12.8px;width:1.6px;height:1.6px;background:#e4e4e4"></div>
<div style="left:533px;top:8.3px;width:29px;height:10.7px;background:#3f3a54"></div>
<span class="t" style="left:537px;transform-origin:0 50%;top:9.0px;font:normal 7px/9px 'Liberation Sans',sans-serif;color:#c8c8d0;transform:scaleX(0.882);font-style:italic;">/mat</span>
<div style="left:557.3px;top:12.8px;width:1.6px;height:1.6px;background:#e4e4e4"></div>
<div style="left:563.2px;top:8.3px;width:27.5px;height:10.7px;background:#5b4a42"></div>
<span class="t" style="left:566.3px;transform-origin:0 50%;top:9.0px;font:normal 7px/9px 'Liberation Sans',sans-serif;color:#d0c8c4;transform:scaleX(0.985);font-style:italic;">/out</span>
<div style="left:586px;top:12.8px;width:1.6px;height:1.6px;background:#e4e4e4"></div>
<span class="t" style="left:595px;transform-origin:0 50%;top:9.0px;font:normal 7px/9px 'Liberation Sans',sans-serif;color:#c8c8c8;transform:scaleX(0.802);">Material Palette</span>
<div style="left:639.3px;top:12.8px;width:1.6px;height:1.6px;background:#e4e4e4"></div>
<span class="t" style="left:647.5px;transform-origin:0 50%;top:9.0px;font:normal 7px/9px 'Liberation Sans',sans-serif;color:#c8c8c8;transform:scaleX(0.72);">Asset Browser</span>
<div style="left:688.5px;top:12.8px;width:1.6px;height:1.6px;background:#e4e4e4"></div>
<div style="left:697.3px;top:12.9px;width:5.4px;height:1.4px;background:#f0f0f0"></div>
<div style="left:699.3px;top:10.9px;width:1.4px;height:5.4px;background:#f0f0f0"></div>
<div style="left:476px;top:19px;width:474px;height:19px;background:linear-gradient(#86967e,#4a5546 60%,#394036)"></div>
<svg style="left:479px;top:23px" width="12" height="11"><path d="M1 5L6 0.5V3.5H11V7H6V10Z" fill="#f2f2f2" stroke="#555" stroke-width=".5"/></svg>
<svg style="left:492px;top:24px" width="10" height="9"><path d="M9 4.5L5 1V3.3H1V5.8H5V8Z" fill="#6a7764"/></svg>
<div style="left:504.5px;top:21.5px;width:446px;height:14.5px;background:#272727;border:1px solid #181818;border-radius:2px"></div>
<div style="left:506.8px;top:23px;width:24px;height:11.5px;background:#3c3c3c;border-radius:2px 0 0 2px"></div>
<svg style="left:530.700px;top:23px" width="3" height="11.500"><path d="M0 0L3 5.750L0 11.500Z" fill="#3c3c3c"/></svg>
<svg style="left:508.500px;top:24.500px" width="8" height="9"><rect x=".5" y=".5" width="2" height="2" fill="#ddd"/><path d="M1.500 2.500V7H3" stroke="#999" stroke-width=".8" fill="none"/><rect x="3" y="5.500" width="4.500" height="3" fill="#b4b4b4"/></svg>
<span class="t" style="left:519.4px;transform-origin:0 50%;top:24.0px;font:normal 8px/10px 'Liberation Sans',sans-serif;color:#d4d4d4;transform:scaleX(0.815);">obj</span>
<svg style="left:537.300px;top:24px" width="10" height="10"><circle cx="5" cy="5" r="4.6" fill="#2b5fa8"/><path d="M5 5L9 2A4.6 4.6 0 0 1 9 8Z" fill="#e8402a"/><path d="M5 5L9 8A4.6 4.6 0 0 1 3 9Z" fill="#f5c518"/><circle cx="4" cy="4" r="1.6" fill="#fff"/></svg>
<span class="t" style="left:549px;transform-origin:0 50%;top:24.0px;font:normal 8px/10px 'Liberation Sans',sans-serif;color:#dcdcdc;transform:scaleX(0.714);">Dune_Solver</span>
<div style="left:476px;top:38px;width:474px;height:2px;background:#1e1e1e"></div>
<div style="left:476px;top:40px;width:474px;height:15px;background:#2a2a2a"></div>
<div style="left:476px;top:40px;width:5px;height:15px;background:#3c3c3c"></div>
<svg style="left:477px;top:41px" width="4" height="4"><path d="M0 4L2 0L4 4Z" fill="#111"/></svg>
<span class="t" style="left:485px;transform-origin:0 50%;top:42.5px;font:normal 8px/10px 'Liberation Sans',sans-serif;color:#dcdcdc;transform:scaleX(0.84);">Add</span>
<span class="t" style="left:500.5px;transform-origin:0 50%;top:42.5px;font:normal 8px/10px 'Liberation Sans',sans-serif;color:#dcdcdc;transform:scaleX(0.84);">Edit</span>
<span class="t" style="left:516.5px;transform-origin:0 50%;top:42.5px;font:normal 8px/10px 'Liberation Sans',sans-serif;color:#dcdcdc;transform:scaleX(0.84);">Go</span>
<span class="t" style="left:530px;transform-origin:0 50%;top:42.5px;font:normal 8px/10px 'Liberation Sans',sans-serif;color:#dcdcdc;transform:scaleX(0.84);">View</span>
<span class="t" style="left:548.5px;transform-origin:0 50%;top:42.5px;font:normal 8px/10px 'Liberation Sans',sans-serif;color:#dcdcdc;transform:scaleX(0.84);">Tools</span>
<span class="t" style="left:568.5px;transform-origin:0 50%;top:42.5px;font:normal 8px/10px 'Liberation Sans',sans-serif;color:#dcdcdc;transform:scaleX(0.84);">Layout</span>
<span class="t" style="left:593px;transform-origin:0 50%;top:42.5px;font:normal 8px/10px 'Liberation Sans',sans-serif;color:#dcdcdc;transform:scaleX(0.84);">Help</span>
<svg style="left:840px;top:40px" width="110" height="14"><path d="M9 2V9.500M9 3.500H13.500M9 6.500H13.500M9 9.500H13.500" stroke="#d8d8d8" stroke-width="1" fill="none"/><rect x="20" y="1.700" width="7" height="8.300" fill="#f0f0f0"/><path d="M20 4.500H27M20 7.200H27" stroke="#aaa" stroke-width=".7"/><rect x="41.200" y="1.700" width="7" height="8.300" fill="#e8e8e8"/><rect x="42" y="2.500" width="2.500" height="2" fill="#e07a28"/><rect x="45" y="2.500" width="2.500" height="2" fill="#d83a3a"/><rect x="42" y="5.500" width="2.500" height="2" fill="#3a68c8"/><rect x="45" y="5.500" width="2.500" height="2" fill="#e8c838"/><rect x="53.200" y="1.700" width="8" height="8.300" fill="#6a6a6a"/><path d="M53.200 5.800H61.200M57.200 1.700V10" stroke="#2a2a2a" stroke-width="1.200"/><rect x="75.300" y="1.700" width="7" height="8.300" fill="#9a9a9a"/><path d="M75.300 5.800H82.300M78.800 1.700V10" stroke="#333" stroke-width="1"/><rect x="76" y="2.500" width="2" height="2.500" fill="#e4e4e4"/><rect x="79.800" y="6.500" width="2" height="2.500" fill="#e4e4e4"/><rect x="87" y="1.700" width="7.800" height="8.300" rx="1" fill="#e6d040"/><path d="M89 3.500H93L90.500 6.500" stroke="#8a7a18" stroke-width=".9" fill="none"/><rect x="99.600" y="1.700" width="7.500" height="8.300" rx="1" fill="#5a98d0"/><path d="M100.500 8L103 4.500L105 6.500L106.500 3.500" stroke="#bfe0ff" stroke-width="1" fill="none"/><circle cx="106.500" cy="9.500" r="1.200" fill="#eee"/></svg>
<div style="left:476px;top:55px;width:96px;height:498px;background:#343434"></div>
<span class="t" style="left:493px;transform-origin:0 50%;top:61.5px;font:normal 12px/14px 'Liberation Sans',sans-serif;color:#484848;transform:scaleX(0.893);">Indie Edition</span>
<span class="t" style="left:505.3px;transform-origin:0 50%;top:65.6px;font:bold 12px/14px 'Liberation Sans',sans-serif;color:#696969;transform:scaleX(1.035);">Geometry</span>
<svg style="left:476px;top:180px" width="96" height="80">
<ellipse cx="39.600" cy="39" rx="21" ry="26" fill="#4d70a6"/>
<ellipse cx="40.200" cy="39" rx="12.800" ry="17.500" fill="#b27dd6"/>
<circle cx="40" cy="51" r="2.300" fill="#d6cfe0"/>
<rect x="17" y="31" width="46" height="16" rx="3.200" fill="#d9d9d9" stroke="#d2aa1a" stroke-width="1.500"/>
<path d="M24.500 32L22.500 46M27.500 32L26 46M51 32L49 46" stroke="#b4b4b4" stroke-width="1.200"/>
<path d="M56 31.800H60A2.400 2.400 0 0 1 62.300 34.200V43.800A2.400 2.400 0 0 1 60 46.200H55Z" fill="#17a9f2"/>
<rect x="69" y="49.500" width="6" height="4.500" fill="#9c9c9c"/><path d="M70.300 49.500V48A1.700 1.700 0 0 1 73.700 48V49.500" stroke="#9c9c9c" stroke-width="1" fill="none"/>
<circle cx="82" cy="50.200" r="2.500" fill="#2a2a2a" stroke="#a2c87a" stroke-width="1"/><circle cx="82.400" cy="49.800" r=".8" fill="#a2c87a"/>
</svg>
<div style="left:543px;top:210px;width:28.5px;height:18px;overflow:hidden;background:transparent"><span class="t" style="left:0.300px;top:2.300px;font:13px/15px 'Liberation Sans',sans-serif;color:#d4d4d4;transform:scaleX(.68);transform-origin:0 50%;text-shadow:0 0 .5px #d4d4d4">dune_s</span></div>
<div style="left:572px;top:55px;width:378px;height:498px;background:#3a3a3a"></div>
<div style="left:571px;top:55px;width:1px;height:498px;background:#2a2a2a"></div>
<div style="left:572px;top:57.5px;width:378px;height:12.5px;background:#464646"></div>
<div style="left:620px;top:57.5px;width:325.5px;height:12.5px;background:#151515"></div>
<div style="left:945.5px;top:57.5px;width:4.5px;height:12.5px;background:#3a3a3a"></div>
<svg style="left:947px;top:61px" width="3" height="5"><path d="M0 0L3 0L3 5L0 5Z" fill="#ddd"/></svg>
<svg style="left:578px;top:66px" width="5" height="3"><path d="M0 0H5L2.5 3Z" fill="#bbb"/></svg>
<span class="t" style="left:585px;transform-origin:0 50%;top:58.8px;font:bold 8px/10px 'Liberation Sans',sans-serif;color:#f0f0f0;transform:scaleX(0.699);">Dune solver</span>
<span class="t" style="left:621.5px;transform-origin:0 50%;top:59.3px;font:normal 8px/10px 'Liberation Mono',monospace;color:#f0f0f0;transform:scaleX(0.776);">dune_solver1</span>
<span class="t" style="right:314px;transform-origin:100% 50%;top:75.6px;font:normal 8px/10px 'Liberation Sans',sans-serif;color:#cbcbcb;transform:scaleX(0.71);text-shadow:0 0 .6px rgba(203,203,203,.7);">Grid Size</span>
<div style="left:644px;top:74.4px;width:171.5px;height:12px;background:#171717"></div>
<span class="t" style="left:645.9px;transform-origin:0 50%;top:75.45px;font:normal 8.5px/10.5px 'Liberation Sans',sans-serif;color:#ededed;transform:scaleX(0.787);">100</span>
<div style="left:817px;top:74.4px;width:140px;height:12px;background:#171717"></div>
<span class="t" style="left:818.9px;transform-origin:0 50%;top:75.45px;font:normal 8.5px/10.5px 'Liberation Sans',sans-serif;color:#ededed;transform:scaleX(0.787);">250</span>
<span class="t" style="right:314px;transform-origin:100% 50%;top:90.6px;font:normal 8px/10px 'Liberation Sans',sans-serif;color:#cbcbcb;transform:scaleX(0.71);text-shadow:0 0 .6px rgba(203,203,203,.7);">Substeps</span>
<div style="left:644px;top:89.4px;width:56.5px;height:12px;background:#171717"></div>
<span class="t" style="left:645.9px;transform-origin:0 50%;top:90.45px;font:normal 8.5px/10.5px 'Liberation Sans',sans-serif;color:#ededed;transform:scaleX(0.787);">1</span>
<div style="left:735px;top:97.2px;width:1px;height:1.5px;background:#323232"></div>
<div style="left:766px;top:97.2px;width:1px;height:1.5px;background:#323232"></div>
<div style="left:798px;top:97.2px;width:1px;height:1.5px;background:#323232"></div>
<div style="left:829px;top:97.2px;width:1px;height:1.5px;background:#323232"></div>
<div style="left:861px;top:97.2px;width:1px;height:1.5px;background:#323232"></div>
<div style="left:893px;top:97.2px;width:1px;height:1.5px;background:#323232"></div>
<div style="left:924px;top:97.2px;width:1px;height:1.5px;background:#323232"></div>
<div style="left:703px;top:93.0px;width:257px;height:3.4px;background:linear-gradient(#2a2a2a 0,#2a2a2a .7px,#7e7e7e .7px,#7e7e7e 2.2px,#2b2b2b 2.2px,#2b2b2b 3.4px)"></div>
<div style="left:702.1px;top:87.7px;width:4.8px;height:13.6px;background:#1f1f1f;border-radius:2.4px"></div>
<div style="left:702.8px;top:88.4px;width:3.4px;height:12.2px;background:linear-gradient(#8c8e8f,#73797d 50%,#868683);border-radius:1.7px"></div>
<div style="left:574px;top:108px;width:376px;height:1px;background:linear-gradient(#353535,#353535 50%,#404040 50%)"></div>
<div style="left:574px;top:165px;width:376px;height:1px;background:linear-gradient(#353535,#353535 50%,#404040 50%)"></div>
<div style="left:574px;top:207.5px;width:376px;height:1px;background:linear-gradient(#353535,#353535 50%,#404040 50%)"></div>
<div style="left:574px;top:249.5px;width:376px;height:1px;background:linear-gradient(#353535,#353535 50%,#404040 50%)"></div>
<span class="t" style="right:314px;transform-origin:100% 50%;top:117.6px;font:normal 8px/10px 'Liberation Sans',sans-serif;color:#cbcbcb;transform:scaleX(0.71);text-shadow:0 0 .6px rgba(203,203,203,.7);">Sand Depth</span>
<div style="left:644px;top:116.4px;width:56.5px;height:12px;background:#171717"></div>
<span class="t" style="left:645.9px;transform-origin:0 50%;top:117.45px;font:normal 8.5px/10.5px 'Liberation Sans',sans-serif;color:#ededed;transform:scaleX(0.787);">25</span>
<div style="left:735px;top:124.2px;width:1px;height:1.5px;background:#323232"></div>
<div style="left:766px;top:124.2px;width:1px;height:1.5px;background:#323232"></div>
<div style="left:798px;top:124.2px;width:1px;height:1.5px;background:#323232"></div>
<div style="left:829px;top:124.2px;width:1px;height:1.5px;background:#323232"></div>
<div style="left:861px;top:124.2px;width:1px;height:1.5px;background:#323232"></div>
<div style="left:893px;top:124.2px;width:1px;height:1.5px;background:#323232"></div>
<div style="left:924px;top:124.2px;width:1px;height:1.5px;background:#323232"></div>
<div style="left:703px;top:119.5px;width:257px;height:4px;background:linear-gradient(#111d31 0,#111d31 .8px,#294a80 .8px,#294a80 2.3px,#0e1b31 2.3px,#0e1b31 4px)"></div>
<span class="t" style="right:314px;transform-origin:100% 50%;top:132.6px;font:normal 8px/10px 'Liberation Sans',sans-serif;color:#cbcbcb;transform:scaleX(0.71);text-shadow:0 0 .6px rgba(203,203,203,.7);">Hop Distance</span>
<div style="left:644px;top:131.4px;width:56.5px;height:12px;background:#171717"></div>
<span class="t" style="left:645.9px;transform-origin:0 50%;top:132.45px;font:normal 8.5px/10.5px 'Liberation Sans',sans-serif;color:#ededed;transform:scaleX(0.787);">5</span>
<div style="left:735px;top:139.2px;width:1px;height:1.5px;background:#323232"></div>
<div style="left:766px;top:139.2px;width:1px;height:1.5px;background:#323232"></div>
<div style="left:798px;top:139.2px;width:1px;height:1.5px;background:#323232"></div>
<div style="left:829px;top:139.2px;width:1px;height:1.5px;background:#323232"></div>
<div style="left:861px;top:139.2px;width:1px;height:1.5px;background:#323232"></div>
<div style="left:893px;top:139.2px;width:1px;height:1.5px;background:#323232"></div>
<div style="left:924px;top:139.2px;width:1px;height:1.5px;background:#323232"></div>
<div style="left:703px;top:135.0px;width:257px;height:3.4px;background:linear-gradient(#2a2a2a 0,#2a2a2a .7px,#7e7e7e .7px,#7e7e7e 2.2px,#2b2b2b 2.2px,#2b2b2b 3.4px)"></div>
<div style="left:703px;top:134.5px;width:142.5px;height:4px;background:linear-gradient(#111d31 0,#111d31 .8px,#294a80 .8px,#294a80 2.3px,#0e1b31 2.3px,#0e1b31 4px)"></div>
<div style="left:843.1px;top:129.7px;width:4.8px;height:13.6px;background:#1f1f1f;border-radius:2.4px"></div>
<div style="left:843.8px;top:130.39999999999998px;width:3.4px;height:12.2px;background:linear-gradient(#8c8e8f,#73797d 50%,#868683);border-radius:1.7px"></div>
<span class="t" style="right:314px;transform-origin:100% 50%;top:147.6px;font:normal 8px/10px 'Liberation Sans',sans-serif;color:#cbcbcb;transform:scaleX(0.71);text-shadow:0 0 .6px rgba(203,203,203,.7);">Shadow Slope</span>
<div style="left:644px;top:146.4px;width:56.5px;height:12px;background:#171717"></div>
<span class="t" style="left:645.9px;transform-origin:0 50%;top:147.45px;font:normal 8.5px/10.5px 'Liberation Sans',sans-serif;color:#ededed;transform:scaleX(0.787);">45</span>
<div style="left:735px;top:154.2px;width:1px;height:1.5px;background:#323232"></div>
<div style="left:766px;top:154.2px;width:1px;height:1.5px;background:#323232"></div>
<div style="left:798px;top:154.2px;width:1px;height:1.5px;background:#323232"></div>
<div style="left:829px;top:154.2px;width:1px;height:1.5px;background:#323232"></div>
<div style="left:861px;top:154.2px;width:1px;height:1.5px;background:#323232"></div>
<div style="left:893px;top:154.2px;width:1px;height:1.5px;background:#323232"></div>
<div style="left:924px;top:154.2px;width:1px;height:1.5px;background:#323232"></div>
<div style="left:703px;top:150.0px;width:257px;height:3.4px;background:linear-gradient(#2a2a2a 0,#2a2a2a .7px,#7e7e7e .7px,#7e7e7e 2.2px,#2b2b2b 2.2px,#2b2b2b 3.4px)"></div>
<div style="left:703px;top:149.5px;width:142.5px;height:4px;background:linear-gradient(#111d31 0,#111d31 .8px,#294a80 .8px,#294a80 2.3px,#0e1b31 2.3px,#0e1b31 4px)"></div>
<div style="left:843.1px;top:144.7px;width:4.8px;height:13.6px;background:#1f1f1f;border-radius:2.4px"></div>
<div style="left:843.8px;top:145.39999999999998px;width:3.4px;height:12.2px;background:linear-gradient(#8c8e8f,#73797d 50%,#868683);border-radius:1.7px"></div>
<span class="t" style="right:314px;transform-origin:100% 50%;top:174.6px;font:normal 8px/10px 'Liberation Sans',sans-serif;color:#cbcbcb;transform:scaleX(0.71);text-shadow:0 0 .6px rgba(203,203,203,.7);">Up Slope Avalanche</span>
<div style="left:644px;top:173.4px;width:56.5px;height:12px;background:#171717"></div>
<span class="t" style="left:645.9px;transform-origin:0 50%;top:174.45px;font:normal 8.5px/10.5px 'Liberation Sans',sans-serif;color:#ededed;transform:scaleX(0.787);">2</span>
<div style="left:735px;top:181.2px;width:1px;height:1.5px;background:#323232"></div>
<div style="left:766px;top:181.2px;width:1px;height:1.5px;background:#323232"></div>
<div style="left:798px;top:181.2px;width:1px;height:1.5px;background:#323232"></div>
<div style="left:829px;top:181.2px;width:1px;height:1.5px;background:#323232"></div>
<div style="left:861px;top:181.2px;width:1px;height:1.5px;background:#323232"></div>
<div style="left:893px;top:181.2px;width:1px;height:1.5px;background:#323232"></div>
<div style="left:924px;top:181.2px;width:1px;height:1.5px;background:#323232"></div>
<div style="left:703px;top:177.0px;width:257px;height:3.4px;background:linear-gradient(#2a2a2a 0,#2a2a2a .7px,#7e7e7e .7px,#7e7e7e 2.2px,#2b2b2b 2.2px,#2b2b2b 3.4px)"></div>
<div style="left:703px;top:176.5px;width:113.5px;height:4px;background:linear-gradient(#111d31 0,#111d31 .8px,#294a80 .8px,#294a80 2.3px,#0e1b31 2.3px,#0e1b31 4px)"></div>
<div style="left:814.1px;top:171.7px;width:4.8px;height:13.6px;background:#1f1f1f;border-radius:2.4px"></div>
<div style="left:814.8px;top:172.39999999999998px;width:3.4px;height:12.2px;background:linear-gradient(#8c8e8f,#73797d 50%,#868683);border-radius:1.7px"></div>
<span class="t" style="right:314px;transform-origin:100% 50%;top:189.6px;font:normal 8px/10px 'Liberation Sans',sans-serif;color:#cbcbcb;transform:scaleX(0.71);text-shadow:0 0 .6px rgba(203,203,203,.7);">Down Slope Avalanche</span>
<div style="left:644px;top:188.4px;width:56.5px;height:12px;background:#171717"></div>
<span class="t" style="left:645.9px;transform-origin:0 50%;top:189.45px;font:normal 8.5px/10.5px 'Liberation Sans',sans-serif;color:#ededed;transform:scaleX(0.787);">2</span>
<div style="left:735px;top:196.2px;width:1px;height:1.5px;background:#323232"></div>
<div style="left:766px;top:196.2px;width:1px;height:1.5px;background:#323232"></div>
<div style="left:798px;top:196.2px;width:1px;height:1.5px;background:#323232"></div>
<div style="left:829px;top:196.2px;width:1px;height:1.5px;background:#323232"></div>
<div style="left:861px;top:196.2px;width:1px;height:1.5px;background:#323232"></div>
<div style="left:893px;top:196.2px;width:1px;height:1.5px;background:#323232"></div>
<div style="left:924px;top:196.2px;width:1px;height:1.5px;background:#323232"></div>
<div style="left:703px;top:192.0px;width:257px;height:3.4px;background:linear-gradient(#2a2a2a 0,#2a2a2a .7px,#7e7e7e .7px,#7e7e7e 2.2px,#2b2b2b 2.2px,#2b2b2b 3.4px)"></div>
<div style="left:703px;top:191.5px;width:113.5px;height:4px;background:linear-gradient(#111d31 0,#111d31 .8px,#294a80 .8px,#294a80 2.3px,#0e1b31 2.3px,#0e1b31 4px)"></div>
<div style="left:814.1px;top:186.7px;width:4.8px;height:13.6px;background:#1f1f1f;border-radius:2.4px"></div>
<div style="left:814.8px;top:187.39999999999998px;width:3.4px;height:12.2px;background:linear-gradient(#8c8e8f,#73797d 50%,#868683);border-radius:1.7px"></div>
<span class="t" style="right:314px;transform-origin:100% 50%;top:216.6px;font:normal 8px/10px 'Liberation Sans',sans-serif;color:#cbcbcb;transform:scaleX(0.71);text-shadow:0 0 .6px rgba(203,203,203,.7);">Sand Stick Chance</span>
<div style="left:644px;top:215.4px;width:56.5px;height:12px;background:#171717"></div>
<span class="t" style="left:645.9px;transform-origin:0 50%;top:216.45px;font:normal 8.5px/10.5px 'Liberation Sans',sans-serif;color:#ededed;transform:scaleX(0.787);">0<span style="display:inline-block;width:4.73px;text-align:center">.</span>6</span>
<div style="left:735px;top:223.2px;width:1px;height:1.5px;background:#323232"></div>
<div style="left:766px;top:223.2px;width:1px;height:1.5px;background:#323232"></div>
<div style="left:798px;top:223.2px;width:1px;height:1.5px;background:#323232"></div>
<div style="left:829px;top:223.2px;width:1px;height:1.5px;background:#323232"></div>
<div style="left:861px;top:223.2px;width:1px;height:1.5px;background:#323232"></div>
<div style="left:893px;top:223.2px;width:1px;height:1.5px;background:#323232"></div>
<div style="left:924px;top:223.2px;width:1px;height:1.5px;background:#323232"></div>
<div style="left:703px;top:219.0px;width:257px;height:3.4px;background:linear-gradient(#2a2a2a 0,#2a2a2a .7px,#7e7e7e .7px,#7e7e7e 2.2px,#2b2b2b 2.2px,#2b2b2b 3.4px)"></div>
<div style="left:703px;top:218.5px;width:170.5px;height:4px;background:linear-gradient(#111d31 0,#111d31 .8px,#294a80 .8px,#294a80 2.3px,#0e1b31 2.3px,#0e1b31 4px)"></div>
<div style="left:871.1px;top:213.7px;width:4.8px;height:13.6px;background:#1f1f1f;border-radius:2.4px"></div>
<div style="left:871.8px;top:214.39999999999998px;width:3.4px;height:12.2px;background:linear-gradient(#8c8e8f,#73797d 50%,#868683);border-radius:1.7px"></div>
<span class="t" style="right:314px;transform-origin:100% 50%;top:231.6px;font:normal 8px/10px 'Liberation Sans',sans-serif;color:#cbcbcb;transform:scaleX(0.71);text-shadow:0 0 .6px rgba(203,203,203,.7);">No Sand Stick Chance</span>
<div style="left:644px;top:230.4px;width:56.5px;height:12px;background:#171717"></div>
<span class="t" style="left:645.9px;transform-origin:0 50%;top:231.45px;font:normal 8.5px/10.5px 'Liberation Sans',sans-serif;color:#ededed;transform:scaleX(0.787);">0<span style="display:inline-block;width:4.73px;text-align:center">.</span>4</span>
<div style="left:735px;top:238.2px;width:1px;height:1.5px;background:#323232"></div>
<div style="left:766px;top:238.2px;width:1px;height:1.5px;background:#323232"></div>
<div style="left:798px;top:238.2px;width:1px;height:1.5px;background:#323232"></div>
<div style="left:829px;top:238.2px;width:1px;height:1.5px;background:#323232"></div>
<div style="left:861px;top:238.2px;width:1px;height:1.5px;background:#323232"></div>
<div style="left:893px;top:238.2px;width:1px;height:1.5px;background:#323232"></div>
<div style="left:924px;top:238.2px;width:1px;height:1.5px;background:#323232"></div>
<div style="left:703px;top:234.0px;width:257px;height:3.4px;background:linear-gradient(#2a2a2a 0,#2a2a2a .7px,#7e7e7e .7px,#7e7e7e 2.2px,#2b2b2b 2.2px,#2b2b2b 3.4px)"></div>
<div style="left:703px;top:233.5px;width:113.5px;height:4px;background:linear-gradient(#111d31 0,#111d31 .8px,#294a80 .8px,#294a80 2.3px,#0e1b31 2.3px,#0e1b31 4px)"></div>
<div style="left:814.1px;top:228.7px;width:4.8px;height:13.6px;background:#1f1f1f;border-radius:2.4px"></div>
<div style="left:814.8px;top:229.39999999999998px;width:3.4px;height:12.2px;background:linear-gradient(#8c8e8f,#73797d 50%,#868683);border-radius:1.7px"></div>
<span class="t" style="right:314px;transform-origin:100% 50%;top:259.1px;font:normal 8px/10px 'Liberation Sans',sans-serif;color:#cbcbcb;transform:scaleX(0.71);text-shadow:0 0 .6px rgba(203,203,203,.7);">Final Height Scale</span>
<div style="left:644px;top:257.9px;width:56.5px;height:12px;background:#171717"></div>
<span class="t" style="left:645.9px;transform-origin:0 50%;top:258.95px;font:normal 8.5px/10.5px 'Liberation Sans',sans-serif;color:#ededed;transform:scaleX(0.787);">0<span style="display:inline-block;width:4.73px;text-align:center">.</span>25</span>
<div style="left:735px;top:265.7px;width:1px;height:1.5px;background:#323232"></div>
<div style="left:766px;top:265.7px;width:1px;height:1.5px;background:#323232"></div>
<div style="left:798px;top:265.7px;width:1px;height:1.5px;background:#323232"></div>
<div style="left:829px;top:265.7px;width:1px;height:1.5px;background:#323232"></div>
<div style="left:861px;top:265.7px;width:1px;height:1.5px;background:#323232"></div>
<div style="left:893px;top:265.7px;width:1px;height:1.5px;background:#323232"></div>
<div style="left:924px;top:265.7px;width:1px;height:1.5px;background:#323232"></div>
<div style="left:703px;top:261.5px;width:257px;height:3.4px;background:linear-gradient(#2a2a2a 0,#2a2a2a .7px,#7e7e7e .7px,#7e7e7e 2.2px,#2b2b2b 2.2px,#2b2b2b 3.4px)"></div>
<div style="left:703px;top:261.0px;width:71px;height:4px;background:linear-gradient(#111d31 0,#111d31 .8px,#294a80 .8px,#294a80 2.3px,#0e1b31 2.3px,#0e1b31 4px)"></div>
<div style="left:771.6px;top:256.2px;width:4.8px;height:13.6px;background:#1f1f1f;border-radius:2.4px"></div>
<div style="left:772.3px;top:256.9px;width:3.4px;height:12.2px;background:linear-gradient(#8c8e8f,#73797d 50%,#868683);border-radius:1.7px"></div>
<svg style="left:645px;top:273px" width="7" height="8"><path d="M1 4L3 6.5L6.5 0.500" stroke="#f4f4f4" stroke-width="1.6" fill="none"/></svg>
<span class="t" style="left:655px;transform-origin:0 50%;top:272.6px;font:normal 8px/10px 'Liberation Sans',sans-serif;color:#c8c8c8;transform:scaleX(0.71);">Extrude Base</span>
<span class="t" style="right:314px;transform-origin:100% 50%;top:286.90000000000003px;font:normal 8px/10px 'Liberation Sans',sans-serif;color:#cbcbcb;transform:scaleX(0.71);text-shadow:0 0 .6px rgba(203,203,203,.7);">Extrude Height</span>
<div style="left:644px;top:285.7px;width:56.5px;height:12px;background:#171717"></div>
<span class="t" style="left:645.9px;transform-origin:0 50%;top:286.75px;font:normal 8.5px/10.5px 'Liberation Sans',sans-serif;color:#ededed;transform:scaleX(0.787);">5</span>
<div style="left:735px;top:293.5px;width:1px;height:1.5px;background:#323232"></div>
<div style="left:766px;top:293.5px;width:1px;height:1.5px;background:#323232"></div>
<div style="left:798px;top:293.5px;width:1px;height:1.5px;background:#323232"></div>
<div style="left:829px;top:293.5px;width:1px;height:1.5px;background:#323232"></div>
<div style="left:861px;top:293.5px;width:1px;height:1.5px;background:#323232"></div>
<div style="left:893px;top:293.5px;width:1px;height:1.5px;background:#323232"></div>
<div style="left:924px;top:293.5px;width:1px;height:1.5px;background:#323232"></div>
<div style="left:703px;top:289.3px;width:257px;height:3.4px;background:linear-gradient(#2a2a2a 0,#2a2a2a .7px,#7e7e7e .7px,#7e7e7e 2.2px,#2b2b2b 2.2px,#2b2b2b 3.4px)"></div>
<div style="left:703px;top:288.8px;width:142.5px;height:4px;background:linear-gradient(#111d31 0,#111d31 .8px,#294a80 .8px,#294a80 2.3px,#0e1b31 2.3px,#0e1b31 4px)"></div>
<div style="left:843.1px;top:284.0px;width:4.8px;height:13.6px;background:#1f1f1f;border-radius:2.4px"></div>
<div style="left:843.8px;top:284.7px;width:3.4px;height:12.2px;background:linear-gradient(#8c8e8f,#73797d 50%,#868683);border-radius:1.7px"></div>
<span class="t" style="right:314px;transform-origin:100% 50%;top:301.6px;font:normal 8px/10px 'Liberation Sans',sans-serif;color:#cbcbcb;transform:scaleX(0.71);text-shadow:0 0 .6px rgba(203,203,203,.7);">Smooth</span>
<div style="left:644px;top:300.4px;width:56.5px;height:12px;background:#171717"></div>
<span class="t" style="left:645.9px;transform-origin:0 50%;top:301.45px;font:normal 8.5px/10.5px 'Liberation Sans',sans-serif;color:#ededed;transform:scaleX(0.787);">5</span>
<div style="left:735px;top:308.2px;width:1px;height:1.5px;background:#323232"></div>
<div style="left:766px;top:308.2px;width:1px;height:1.5px;background:#323232"></div>
<div style="left:798px;top:308.2px;width:1px;height:1.5px;background:#323232"></div>
<div style="left:829px;top:308.2px;width:1px;height:1.5px;background:#323232"></div>
<div style="left:861px;top:308.2px;width:1px;height:1.5px;background:#323232"></div>
<div style="left:893px;top:308.2px;width:1px;height:1.5px;background:#323232"></div>
<div style="left:924px;top:308.2px;width:1px;height:1.5px;background:#323232"></div>
<div style="left:703px;top:304.0px;width:257px;height:3.4px;background:linear-gradient(#2a2a2a 0,#2a2a2a .7px,#7e7e7e .7px,#7e7e7e 2.2px,#2b2b2b 2.2px,#2b2b2b 3.4px)"></div>
<div style="left:703px;top:303.5px;width:142.5px;height:4px;background:linear-gradient(#111d31 0,#111d31 .8px,#294a80 .8px,#294a80 2.3px,#0e1b31 2.3px,#0e1b31 4px)"></div>
<div style="left:843.1px;top:298.7px;width:4.8px;height:13.6px;background:#1f1f1f;border-radius:2.4px"></div>
<div style="left:843.8px;top:299.4px;width:3.4px;height:12.2px;background:linear-gradient(#8c8e8f,#73797d 50%,#868683);border-radius:1.7px"></div>
<span class="t" style="left:575px;transform-origin:0 50%;top:316.3px;font:normal 8px/10px 'Liberation Sans',sans-serif;color:#c4c4c4;transform:scaleX(0.71);">Height Ramp</span>
<div style="left:573.5px;top:326.5px;width:380px;height:93.5px;border:1px solid #202020;background:#3a3a3a"></div>
<div style="left:577px;top:329px;width:10px;height:12px;background:linear-gradient(#626262,#4e4e4e);border:1px solid #2a2a2a;border-radius:1.500px"></div>
<div style="left:587.5px;top:329px;width:10px;height:12px;background:linear-gradient(#626262,#4e4e4e);border:1px solid #2a2a2a;border-radius:1.500px"></div>
<svg style="left:577px;top:329px" width="21" height="12"><path d="M3.500 4.500L6.500 7.500M6.500 4.500L3.500 7.500" stroke="#eee" stroke-width="1"/><path d="M13 6H18.500M15.750 3.250V8.750" stroke="#fff" stroke-width="1.500"/></svg>
<div style="left:603px;top:328.5px;width:350px;height:19px;background:linear-gradient(90deg,#8a7f68 0,#a08450 10px,#b88c34 40px,#c8962f 150px,#e4a93a 350px)"></div>
<div style="left:603px;top:328.5px;width:1px;height:19px;background:#eee"></div>
<svg style="left:579.200px;top:348.3px" width="4" height="3.200"><path d="M0 0H4L2 3.200Z" fill="#f0f0f0"/></svg>
<svg style="left:600px;top:346px" width="8" height="10"><path d="M0.500 4L4 0.500L7.500 4V9.500H0.500Z" fill="#2a2a2a" stroke="#111" stroke-width=".8"/><rect x="2" y="5" width="4" height="3.500" fill="#8a8068"/></svg>
<svg style="left:613px;top:346px" width="8" height="10"><path d="M0.500 4L4 0.500L7.500 4V9.500H0.500Z" fill="#2a2a2a" stroke="#111" stroke-width=".8"/><rect x="2" y="5" width="4" height="3.500" fill="#c9952f"/></svg>
<span class="t" style="right:309px;transform-origin:100% 50%;top:361.6px;font:normal 8px/10px 'Liberation Sans',sans-serif;color:#cbcbcb;transform:scaleX(0.71);text-shadow:0 0 .6px rgba(203,203,203,.7);">Point No.</span>
<div style="left:646.5px;top:360.65px;width:28.5px;height:11.5px;background:#171717"></div>
<span class="t" style="left:648.4px;transform-origin:0 50%;top:361.45px;font:normal 8.5px/10.5px 'Liberation Sans',sans-serif;color:#ededed;transform:scaleX(0.787);">3</span>
<div style="left:709px;top:368.2px;width:1px;height:1.5px;background:#323232"></div>
<div style="left:740px;top:368.2px;width:1px;height:1.5px;background:#323232"></div>
<div style="left:772px;top:368.2px;width:1px;height:1.5px;background:#323232"></div>
<div style="left:803px;top:368.2px;width:1px;height:1.5px;background:#323232"></div>
<div style="left:835px;top:368.2px;width:1px;height:1.5px;background:#323232"></div>
<div style="left:867px;top:368.2px;width:1px;height:1.5px;background:#323232"></div>
<div style="left:898px;top:368.2px;width:1px;height:1.5px;background:#323232"></div>
<div style="left:930px;top:368.2px;width:1px;height:1.5px;background:#323232"></div>
<div style="left:677px;top:363.5px;width:283px;height:4px;background:linear-gradient(#111d31 0,#111d31 .8px,#294a80 .8px,#294a80 2.3px,#0e1b31 2.3px,#0e1b31 4px)"></div>
<span class="t" style="right:311px;transform-origin:100% 50%;top:376.6px;font:normal 8px/10px 'Liberation Sans',sans-serif;color:#cbcbcb;transform:scaleX(0.71);text-shadow:0 0 .6px rgba(203,203,203,.7);">Position</span>
<div style="left:646.5px;top:375.65px;width:55.5px;height:11.5px;background:#171717"></div>
<span class="t" style="left:648.4px;transform-origin:0 50%;top:376.45px;font:bold 8.5px/10.5px 'Liberation Sans',sans-serif;color:#ededed;transform:scaleX(0.787);">1</span>
<div style="left:736px;top:383.2px;width:1px;height:1.5px;background:#323232"></div>
<div style="left:767px;top:383.2px;width:1px;height:1.5px;background:#323232"></div>
<div style="left:799px;top:383.2px;width:1px;height:1.5px;background:#323232"></div>
<div style="left:830px;top:383.2px;width:1px;height:1.5px;background:#323232"></div>
<div style="left:862px;top:383.2px;width:1px;height:1.5px;background:#323232"></div>
<div style="left:894px;top:383.2px;width:1px;height:1.5px;background:#323232"></div>
<div style="left:925px;top:383.2px;width:1px;height:1.5px;background:#323232"></div>
<div style="left:704px;top:378.5px;width:256px;height:4px;background:linear-gradient(#111d31 0,#111d31 .8px,#294a80 .8px,#294a80 2.3px,#0e1b31 2.3px,#0e1b31 4px)"></div>
<span class="t" style="right:312px;transform-origin:100% 50%;top:392.0px;font:normal 8px/10px 'Liberation Sans',sans-serif;color:#cbcbcb;transform:scaleX(0.71);text-shadow:0 0 .6px rgba(203,203,203,.7);">Color</span>
<div style="left:647.5px;top:391.2px;width:21px;height:10px;background:#e9ad3e;border:1px solid #222"></div>
<svg style="left:672.5px;top:392px" width="11" height="10"><defs><radialGradient id="w321"><stop offset="0" stop-color="#fff"/><stop offset="1" stop-color="#fff" stop-opacity="0"/></radialGradient></defs><circle cx="4.500" cy="4.500" r="4.300" fill="#e050a0"/><path d="M4.500 4.500L4.500 .2A4.300 4.300 0 0 1 8.200 6.600Z" fill="#40c0e0"/><path d="M4.500 4.500L8.200 6.600A4.300 4.300 0 0 1 .8 6.600Z" fill="#a0e040"/><circle cx="4.500" cy="4.500" r="4" fill="url(#w321)"/><path d="M8 7.500L10.500 8.750L8 10Z" fill="#ccc"/></svg>
<div style="left:685px;top:390.2px;width:98.5px;height:13px;background:#171717"></div>
<span class="t" style="left:686.9px;transform-origin:0 50%;top:391.75px;font:bold 8.5px/10.5px 'Liberation Sans',sans-serif;color:#ededed;transform:scaleX(0.787);">0<span style="display:inline-block;width:4.73px;text-align:center">.</span>785</span>
<div style="left:786px;top:390.2px;width:98.5px;height:13px;background:#171717"></div>
<span class="t" style="left:787.9px;transform-origin:0 50%;top:391.75px;font:bold 8.5px/10.5px 'Liberation Sans',sans-serif;color:#ededed;transform:scaleX(0.787);">0<span style="display:inline-block;width:4.73px;text-align:center">.</span>41134</span>
<div style="left:886.5px;top:390.2px;width:80px;height:13px;background:#171717"></div>
<span class="t" style="left:888.4px;transform-origin:0 50%;top:391.75px;font:bold 8.5px/10.5px 'Liberation Sans',sans-serif;color:#ededed;transform:scaleX(0.787);">0<span style="display:inline-block;width:4.73px;text-align:center">.</span>03768</span>
<span class="t" style="right:314px;transform-origin:100% 50%;top:407.6px;font:normal 8px/10px 'Liberation Sans',sans-serif;color:#cbcbcb;transform:scaleX(0.71);text-shadow:0 0 .6px rgba(203,203,203,.7);">Interpolation</span>
<div style="left:646.5px;top:405.8px;width:66.5px;height:12px;background:linear-gradient(#5e5e5e,#4a4a4a);border:1px solid #2a2a2a;border-radius:2px"></div>
<span class="t" style="left:653.6px;transform-origin:0 50%;top:407.3px;font:normal 8px/10px 'Liberation Sans',sans-serif;color:#e0e0e0;transform:scaleX(0.72);">Linear</span>
<svg style="left:705.500px;top:408px" width="5" height="9"><path d="M0.500 3.500L2.500 0.500L4.500 3.500ZM0.500 5.500L2.500 8.500L4.500 5.500Z" fill="#ddd"/></svg>
<div style="left:644.5px;top:436.5px;width:8px;height:8px;background:#1c1c1c;border:1px solid #2a2a2a"></div>
<span class="t" style="left:655px;transform-origin:0 50%;top:436.3px;font:normal 8px/10px 'Liberation Sans',sans-serif;color:#c8c8c8;transform:scaleX(0.71);">Visualize Shadow</span>
<span class="t" style="left:575px;transform-origin:0 50%;top:449.7px;font:normal 8px/10px 'Liberation Sans',sans-serif;color:#c4c4c4;transform:scaleX(0.71);">Shadow Ramp</span>
<div style="left:573.5px;top:460.5px;width:380px;height:93.5px;border:1px solid #202020;background:#3a3a3a"></div>
<div style="left:577px;top:463px;width:10px;height:12px;background:linear-gradient(#626262,#4e4e4e);border:1px solid #2a2a2a;border-radius:1.500px"></div>
<div style="left:587.5px;top:463px;width:10px;height:12px;background:linear-gradient(#626262,#4e4e4e);border:1px solid #2a2a2a;border-radius:1.500px"></div>
<svg style="left:577px;top:463px" width="21" height="12"><path d="M3.500 4.500L6.500 7.500M6.500 4.500L3.500 7.500" stroke="#eee" stroke-width="1"/><path d="M13 6H18.500M15.750 3.250V8.750" stroke="#fff" stroke-width="1.500"/></svg>
<div style="left:603px;top:462.5px;width:350px;height:19px;background:linear-gradient(90deg,#0a0000 0,#4a0000 60px,#900000 130px,#d00000 240px,#f20000 350px)"></div>
<div style="left:603px;top:462.5px;width:1px;height:19px;background:#eee"></div>
<svg style="left:579.200px;top:482.3px" width="4" height="3.200"><path d="M0 0H4L2 3.200Z" fill="#f0f0f0"/></svg>
<svg style="left:600px;top:480px" width="8" height="10"><path d="M0.500 4L4 0.500L7.500 4V9.500H0.500Z" fill="#2a2a2a" stroke="#111" stroke-width=".8"/><rect x="2" y="5" width="4" height="3.500" fill="#000"/></svg>
<span class="t" style="right:309px;transform-origin:100% 50%;top:495.6px;font:normal 8px/10px 'Liberation Sans',sans-serif;color:#cbcbcb;transform:scaleX(0.71);text-shadow:0 0 .6px rgba(203,203,203,.7);">Point No.</span>
<div style="left:646.5px;top:494.65px;width:28.5px;height:11.5px;background:#171717"></div>
<span class="t" style="left:648.4px;transform-origin:0 50%;top:495.45px;font:normal 8.5px/10.5px 'Liberation Sans',sans-serif;color:#ededed;transform:scaleX(0.787);">2</span>
<div style="left:709px;top:502.2px;width:1px;height:1.5px;background:#323232"></div>
<div style="left:740px;top:502.2px;width:1px;height:1.5px;background:#323232"></div>
<div style="left:772px;top:502.2px;width:1px;height:1.5px;background:#323232"></div>
<div style="left:803px;top:502.2px;width:1px;height:1.5px;background:#323232"></div>
<div style="left:835px;top:502.2px;width:1px;height:1.5px;background:#323232"></div>
<div style="left:867px;top:502.2px;width:1px;height:1.5px;background:#323232"></div>
<div style="left:898px;top:502.2px;width:1px;height:1.5px;background:#323232"></div>
<div style="left:930px;top:502.2px;width:1px;height:1.5px;background:#323232"></div>
<div style="left:677px;top:497.5px;width:283px;height:4px;background:linear-gradient(#111d31 0,#111d31 .8px,#294a80 .8px,#294a80 2.3px,#0e1b31 2.3px,#0e1b31 4px)"></div>
<span class="t" style="right:311px;transform-origin:100% 50%;top:510.6px;font:normal 8px/10px 'Liberation Sans',sans-serif;color:#cbcbcb;transform:scaleX(0.71);text-shadow:0 0 .6px rgba(203,203,203,.7);">Position</span>
<div style="left:646.5px;top:509.65px;width:55.5px;height:11.5px;background:#171717"></div>
<span class="t" style="left:648.4px;transform-origin:0 50%;top:510.45000000000005px;font:bold 8.5px/10.5px 'Liberation Sans',sans-serif;color:#ededed;transform:scaleX(0.787);">1</span>
<div style="left:736px;top:517.2px;width:1px;height:1.5px;background:#323232"></div>
<div style="left:767px;top:517.2px;width:1px;height:1.5px;background:#323232"></div>
<div style="left:799px;top:517.2px;width:1px;height:1.5px;background:#323232"></div>
<div style="left:830px;top:517.2px;width:1px;height:1.5px;background:#323232"></div>
<div style="left:862px;top:517.2px;width:1px;height:1.5px;background:#323232"></div>
<div style="left:894px;top:517.2px;width:1px;height:1.5px;background:#323232"></div>
<div style="left:925px;top:517.2px;width:1px;height:1.5px;background:#323232"></div>
<div style="left:704px;top:512.5px;width:256px;height:4px;background:linear-gradient(#111d31 0,#111d31 .8px,#294a80 .8px,#294a80 2.3px,#0e1b31 2.3px,#0e1b31 4px)"></div>
<span class="t" style="right:312px;transform-origin:100% 50%;top:526.0px;font:normal 8px/10px 'Liberation Sans',sans-serif;color:#cbcbcb;transform:scaleX(0.71);text-shadow:0 0 .6px rgba(203,203,203,.7);">Color</span>
<div style="left:647.5px;top:525.2px;width:21px;height:10px;background:#f00505;border:1px solid #222"></div>
<svg style="left:672.5px;top:526px" width="11" height="10"><defs><radialGradient id="w455"><stop offset="0" stop-color="#fff"/><stop offset="1" stop-color="#fff" stop-opacity="0"/></radialGradient></defs><circle cx="4.500" cy="4.500" r="4.300" fill="#e050a0"/><path d="M4.500 4.500L4.500 .2A4.300 4.300 0 0 1 8.200 6.600Z" fill="#40c0e0"/><path d="M4.500 4.500L8.200 6.600A4.300 4.300 0 0 1 .8 6.600Z" fill="#a0e040"/><circle cx="4.500" cy="4.500" r="4" fill="url(#w455)"/><path d="M8 7.500L10.500 8.750L8 10Z" fill="#ccc"/></svg>
<div style="left:685px;top:524.1999999999999px;width:98.5px;height:13px;background:#171717"></div>
<span class="t" style="left:686.9px;transform-origin:0 50%;top:525.75px;font:bold 8.5px/10.5px 'Liberation Sans',sans-serif;color:#ededed;transform:scaleX(0.787);">1</span>
<div style="left:786px;top:524.1999999999999px;width:98.5px;height:13px;background:#171717"></div>
<span class="t" style="left:787.9px;transform-origin:0 50%;top:525.75px;font:bold 8.5px/10.5px 'Liberation Sans',sans-serif;color:#ededed;transform:scaleX(0.787);">0</span>
<div style="left:886.5px;top:524.1999999999999px;width:80px;height:13px;background:#171717"></div>
<span class="t" style="left:888.4px;transform-origin:0 50%;top:525.75px;font:bold 8.5px/10.5px 'Liberation Sans',sans-serif;color:#ededed;transform:scaleX(0.787);">0</span>
<span class="t" style="right:314px;transform-origin:100% 50%;top:541.6px;font:normal 8px/10px 'Liberation Sans',sans-serif;color:#cbcbcb;transform:scaleX(0.71);text-shadow:0 0 .6px rgba(203,203,203,.7);">Interpolation</span>
<div style="left:646.5px;top:539.8px;width:66.5px;height:12px;background:linear-gradient(#5e5e5e,#4a4a4a);border:1px solid #2a2a2a;border-radius:2px"></div>
<span class="t" style="left:653.6px;transform-origin:0 50%;top:541.3px;font:normal 8px/10px 'Liberation Sans',sans-serif;color:#e0e0e0;transform:scaleX(0.72);">Linear</span>
<svg style="left:705.500px;top:542px" width="5" height="9"><path d="M0.500 3.500L2.500 0.500L4.500 3.500ZM0.500 5.500L2.500 8.500L4.500 5.500Z" fill="#ddd"/></svg>
<div style="left:0px;top:552px;width:950px;height:28px;background:#303030"></div>
<div style="left:0px;top:552px;width:472px;height:4.3px;background:#353535"></div>
<div style="left:458px;top:552px;width:14px;height:4.3px;background:#424242"></div>
<div style="left:0px;top:556.3px;width:950px;height:1.1px;background:#474747"></div>
<div style="left:183.5px;top:578.2px;width:728px;height:1.8px;background:#4a4a4a"></div>
<div style="left:476px;top:549.5px;width:474px;height:7px;background:#2e2e2e"></div>
<div style="left:232px;top:554px;width:11px;height:2px;background:#555"></div>
<div style="left:220px;top:554.5px;width:1.5px;height:1.5px;background:#aaa"></div>
<div style="left:252.5px;top:554.5px;width:1.5px;height:1.5px;background:#aaa"></div>
<div style="left:4.1px;top:562.8px;width:13.6px;height:17.4px;background:linear-gradient(#525252,#464646);border:1px solid #242424;border-radius:1.5px"></div>
<svg style="left:4.3px;top:563.5px" width="13" height="16"><rect x="2.2" y="5" width="1.3" height="6" fill="#f2f2f2"/><path d="M7 5V11L3.500 8Z M10.800 5V11L7.300 8Z" fill="#f2f2f2"/></svg>
<div style="left:18.32px;top:562.8px;width:13.6px;height:17.4px;background:linear-gradient(#525252,#464646);border:1px solid #242424;border-radius:1.5px"></div>
<svg style="left:18.52px;top:563.5px" width="13" height="16"><rect x="3.300" y="5" width="1.500" height="6" fill="#6ed03a"/><path d="M9.500 5V11L5.500 8Z" fill="#f2f2f2"/></svg>
<div style="left:32.54px;top:562.8px;width:13.6px;height:17.4px;background:linear-gradient(#525252,#464646);border:1px solid #242424;border-radius:1.5px"></div>
<svg style="left:32.74px;top:563.5px" width="13" height="16"><rect x="8.700" y="5" width="1.500" height="6" fill="#f2f2f2"/><path d="M7.500 5V11L3.500 8Z" fill="#f2f2f2"/></svg>
<div style="left:46.76px;top:562.8px;width:13.6px;height:17.4px;background:linear-gradient(#525252,#464646);border:1px solid #242424;border-radius:1.5px"></div>
<svg style="left:46.96px;top:563.5px" width="13" height="16"><path d="M9.500 4V12L3.800 8Z" fill="#f2f2f2"/></svg>
<div style="left:60.98px;top:562.3px;width:13.4px;height:17.9px;background:#6a5a3c;border:2px solid #cd921f;border-radius:1.500px"></div>
<svg style="left:61.18px;top:563.5px" width="13" height="16"><rect x="3.300" y="3.900" width="6.600" height="7" fill="#ececec"/></svg>
<div style="left:75.2px;top:562.8px;width:13.6px;height:17.4px;background:linear-gradient(#525252,#464646);border:1px solid #242424;border-radius:1.5px"></div>
<svg style="left:75.4px;top:563.5px" width="13" height="16"><path d="M4 4V12L9.700 8Z" fill="#f2f2f2"/></svg>
<div style="left:89.42px;top:562.8px;width:13.6px;height:17.4px;background:linear-gradient(#525252,#464646);border:1px solid #242424;border-radius:1.5px"></div>
<svg style="left:89.62px;top:563.5px" width="13" height="16"><rect x="3.300" y="5" width="1.500" height="6" fill="#f2f2f2"/><path d="M6 5V11L10 8Z" fill="#f2f2f2"/></svg>
<div style="left:103.64px;top:562.8px;width:13.6px;height:17.4px;background:linear-gradient(#525252,#464646);border:1px solid #242424;border-radius:1.5px"></div>
<svg style="left:103.84px;top:563.5px" width="13" height="16"><rect x="8.700" y="5" width="1.500" height="6" fill="#6ed03a"/><path d="M4 5V11L8 8Z" fill="#f2f2f2"/></svg>
<div style="left:117.86px;top:562.8px;width:13.6px;height:17.4px;background:linear-gradient(#525252,#464646);border:1px solid #242424;border-radius:1.5px"></div>
<svg style="left:118.06px;top:563.5px" width="13" height="16"><rect x="9.800" y="5" width="1.300" height="6" fill="#f2f2f2"/><path d="M2.500 5V11L6 8Z M6.200 5V11L9.700 8Z" fill="#f2f2f2"/></svg>
<div style="left:134.2px;top:563.5px;width:24.8px;height:16.5px;background:#1e1e1e"></div>
<span class="t" style="left:136px;transform-origin:0 50%;top:566.95px;font:normal 8.5px/10.5px 'Liberation Sans',sans-serif;color:#e0e0e0;transform:scaleX(0.787);">128</span>
<div style="left:161.6px;top:562.6px;width:21px;height:7px;background:#1a1a1a"></div>
<span class="t" style="left:163px;transform-origin:0 50%;top:561.2px;font:bold 8px/10px 'Liberation Sans',sans-serif;color:#eee;transform:scaleX(0.8);">1</span>
<span class="t" style="left:163px;transform-origin:0 50%;top:570.8px;font:bold 8px/10px 'Liberation Sans',sans-serif;color:#eee;transform:scaleX(0.8);">1</span>
<div style="left:183px;top:565.4px;width:729px;height:6.2px;background:#2a84ee"></div>
<div style="left:183px;top:565.4px;width:729px;height:0.8px;background:#2068c4"></div>
<div style="left:183px;top:570.8px;width:729px;height:0.8px;background:#1c5db0"></div>
<svg style="left:0;top:565.6px" width="950" height="6"><rect x="182.00" y="0" width="1.4" height="5.800" fill="#cfe4ff"/><rect x="185.34" y="1.800" width=".7" height="2.800" fill="#559cf0"/><rect x="191.41" y="1.800" width=".7" height="2.800" fill="#559cf0"/><rect x="197.49" y="1.800" width=".7" height="2.800" fill="#559cf0"/><rect x="203.56" y="1.800" width=".7" height="2.800" fill="#559cf0"/><rect x="209.64" y="1.800" width=".7" height="2.800" fill="#559cf0"/><rect x="215.71" y="1.800" width=".7" height="2.800" fill="#559cf0"/><rect x="221.79" y="1.800" width=".7" height="2.800" fill="#559cf0"/><rect x="227.86" y="1.800" width=".7" height="2.800" fill="#559cf0"/><rect x="233.94" y="1.800" width=".7" height="2.800" fill="#559cf0"/><rect x="240.01" y="1.800" width=".7" height="2.800" fill="#559cf0"/><rect x="246.09" y="1.800" width=".7" height="2.800" fill="#559cf0"/><rect x="251.86" y="0" width="1.4" height="5.800" fill="#cfe4ff"/><rect x="258.24" y="1.800" width=".7" height="2.800" fill="#559cf0"/><rect x="264.31" y="1.800" width=".7" height="2.800" fill="#559cf0"/><rect x="270.39" y="1.800" width=".7" height="2.800" fill="#559cf0"/><rect x="276.46" y="1.800" width=".7" height="2.800" fill="#559cf0"/><rect x="282.54" y="1.800" width=".7" height="2.800" fill="#559cf0"/><rect x="288.61" y="1.800" width=".7" height="2.800" fill="#559cf0"/><rect x="294.69" y="1.800" width=".7" height="2.800" fill="#559cf0"/><rect x="300.76" y="1.800" width=".7" height="2.800" fill="#559cf0"/><rect x="306.84" y="1.800" width=".7" height="2.800" fill="#559cf0"/><rect x="312.91" y="1.800" width=".7" height="2.800" fill="#559cf0"/><rect x="318.99" y="1.800" width=".7" height="2.800" fill="#559cf0"/><rect x="324.76" y="0" width="1.4" height="5.800" fill="#cfe4ff"/><rect x="331.14" y="1.800" width=".7" height="2.800" fill="#559cf0"/><rect x="337.21" y="1.800" width=".7" height="2.800" fill="#559cf0"/><rect x="343.29" y="1.800" width=".7" height="2.800" fill="#559cf0"/><rect x="349.36" y="1.800" width=".7" height="2.800" fill="#559cf0"/><rect x="355.44" y="1.800" width=".7" height="2.800" fill="#559cf0"/><rect x="361.51" y="1.800" width=".7" height="2.800" fill="#559cf0"/><rect x="367.59" y="1.800" width=".7" height="2.800" fill="#559cf0"/><rect x="373.66" y="1.800" width=".7" height="2.800" fill="#559cf0"/><rect x="379.74" y="1.800" width=".7" height="2.800" fill="#559cf0"/><rect x="385.81" y="1.800" width=".7" height="2.800" fill="#559cf0"/><rect x="391.89" y="1.800" width=".7" height="2.800" fill="#559cf0"/><rect x="397.66" y="0" width="1.4" height="5.800" fill="#cfe4ff"/><rect x="404.04" y="1.800" width=".7" height="2.800" fill="#559cf0"/><rect x="410.11" y="1.800" width=".7" height="2.800" fill="#559cf0"/><rect x="416.19" y="1.800" width=".7" height="2.800" fill="#559cf0"/><rect x="422.26" y="1.800" width=".7" height="2.800" fill="#559cf0"/><rect x="428.34" y="1.800" width=".7" height="2.800" fill="#559cf0"/><rect x="434.41" y="1.800" width=".7" height="2.800" fill="#559cf0"/><rect x="440.49" y="1.800" width=".7" height="2.800" fill="#559cf0"/><rect x="446.56" y="1.800" width=".7" height="2.800" fill="#559cf0"/><rect x="452.64" y="1.800" width=".7" height="2.800" fill="#559cf0"/><rect x="458.71" y="1.800" width=".7" height="2.800" fill="#559cf0"/><rect x="464.79" y="1.800" width=".7" height="2.800" fill="#559cf0"/><rect x="470.56" y="0" width="1.4" height="5.800" fill="#cfe4ff"/><rect x="476.94" y="1.800" width=".7" height="2.800" fill="#559cf0"/><rect x="483.01" y="1.800" width=".7" height="2.800" fill="#559cf0"/><rect x="489.09" y="1.800" width=".7" height="2.800" fill="#559cf0"/><rect x="495.16" y="1.800" width=".7" height="2.800" fill="#559cf0"/><rect x="501.24" y="1.800" width=".7" height="2.800" fill="#559cf0"/><rect x="507.31" y="1.800" width=".7" height="2.800" fill="#559cf0"/><rect x="513.39" y="1.800" width=".7" height="2.800" fill="#559cf0"/><rect x="519.46" y="1.800" width=".7" height="2.800" fill="#559cf0"/><rect x="525.54" y="1.800" width=".7" height="2.800" fill="#559cf0"/><rect x="531.61" y="1.800" width=".7" height="2.800" fill="#559cf0"/><rect x="537.69" y="1.800" width=".7" height="2.800" fill="#559cf0"/><rect x="543.46" y="0" width="1.4" height="5.800" fill="#cfe4ff"/><rect x="549.84" y="1.800" width=".7" height="2.800" fill="#559cf0"/><rect x="555.91" y="1.800" width=".7" height="2.800" fill="#559cf0"/><rect x="561.99" y="1.800" width=".7" height="2.800" fill="#559cf0"/><rect x="568.06" y="1.800" width=".7" height="2.800" fill="#559cf0"/><rect x="574.14" y="1.800" width=".7" height="2.800" fill="#559cf0"/><rect x="580.21" y="1.800" width=".7" height="2.800" fill="#559cf0"/><rect x="586.29" y="1.800" width=".7" height="2.800" fill="#559cf0"/><rect x="592.36" y="1.800" width=".7" height="2.800" fill="#559cf0"/><rect x="598.44" y="1.800" width=".7" height="2.800" fill="#559cf0"/><rect x="604.51" y="1.800" width=".7" height="2.800" fill="#559cf0"/><rect x="610.59" y="1.800" width=".7" height="2.800" fill="#559cf0"/><rect x="616.36" y="0" width="1.4" height="5.800" fill="#cfe4ff"/><rect x="622.74" y="1.800" width=".7" height="2.800" fill="#559cf0"/><rect x="628.81" y="1.800" width=".7" height="2.800" fill="#559cf0"/><rect x="634.89" y="1.800" width=".7" height="2.800" fill="#559cf0"/><rect x="640.96" y="1.800" width=".7" height="2.800" fill="#559cf0"/><rect x="647.04" y="1.800" width=".7" height="2.800" fill="#559cf0"/><rect x="653.11" y="1.800" width=".7" height="2.800" fill="#559cf0"/><rect x="659.19" y="1.800" width=".7" height="2.800" fill="#559cf0"/><rect x="665.26" y="1.800" width=".7" height="2.800" fill="#559cf0"/><rect x="671.34" y="1.800" width=".7" height="2.800" fill="#559cf0"/><rect x="677.41" y="1.800" width=".7" height="2.800" fill="#559cf0"/><rect x="683.49" y="1.800" width=".7" height="2.800" fill="#559cf0"/><rect x="689.26" y="0" width="1.4" height="5.800" fill="#cfe4ff"/><rect x="695.64" y="1.800" width=".7" height="2.800" fill="#559cf0"/><rect x="701.71" y="1.800" width=".7" height="2.800" fill="#559cf0"/><rect x="707.79" y="1.800" width=".7" height="2.800" fill="#559cf0"/><rect x="713.86" y="1.800" width=".7" height="2.800" fill="#559cf0"/><rect x="719.94" y="1.800" width=".7" height="2.800" fill="#559cf0"/><rect x="726.01" y="1.800" width=".7" height="2.800" fill="#559cf0"/><rect x="732.09" y="1.800" width=".7" height="2.800" fill="#559cf0"/><rect x="738.16" y="1.800" width=".7" height="2.800" fill="#559cf0"/><rect x="744.24" y="1.800" width=".7" height="2.800" fill="#559cf0"/><rect x="750.31" y="1.800" width=".7" height="2.800" fill="#559cf0"/><rect x="756.39" y="1.800" width=".7" height="2.800" fill="#559cf0"/><rect x="762.16" y="0" width="1.4" height="5.800" fill="#cfe4ff"/><rect x="768.54" y="1.800" width=".7" height="2.800" fill="#559cf0"/><rect x="774.61" y="1.800" width=".7" height="2.800" fill="#559cf0"/><rect x="780.69" y="1.800" width=".7" height="2.800" fill="#559cf0"/><rect x="786.76" y="1.800" width=".7" height="2.800" fill="#559cf0"/><rect x="792.84" y="1.800" width=".7" height="2.800" fill="#559cf0"/><rect x="798.91" y="1.800" width=".7" height="2.800" fill="#559cf0"/><rect x="804.99" y="1.800" width=".7" height="2.800" fill="#559cf0"/><rect x="811.06" y="1.800" width=".7" height="2.800" fill="#559cf0"/><rect x="817.14" y="1.800" width=".7" height="2.800" fill="#559cf0"/><rect x="823.21" y="1.800" width=".7" height="2.800" fill="#559cf0"/><rect x="829.29" y="1.800" width=".7" height="2.800" fill="#559cf0"/><rect x="835.06" y="0" width="1.4" height="5.800" fill="#cfe4ff"/><rect x="841.44" y="1.800" width=".7" height="2.800" fill="#559cf0"/><rect x="847.51" y="1.800" width=".7" height="2.800" fill="#559cf0"/><rect x="853.59" y="1.800" width=".7" height="2.800" fill="#559cf0"/><rect x="859.66" y="1.800" width=".7" height="2.800" fill="#559cf0"/><rect x="865.74" y="1.800" width=".7" height="2.800" fill="#559cf0"/><rect x="871.81" y="1.800" width=".7" height="2.800" fill="#559cf0"/><rect x="877.89" y="1.800" width=".7" height="2.800" fill="#559cf0"/><rect x="883.96" y="1.800" width=".7" height="2.800" fill="#559cf0"/><rect x="890.04" y="1.800" width=".7" height="2.800" fill="#559cf0"/><rect x="896.11" y="1.800" width=".7" height="2.800" fill="#559cf0"/><rect x="902.19" y="1.800" width=".7" height="2.800" fill="#559cf0"/><rect x="907.96" y="0" width="1.4" height="5.800" fill="#cfe4ff"/></svg>
<span class="t" style="left:183.0px;transform-origin:0 50%;top:558.1px;font:normal 7px/9px 'Liberation Sans',sans-serif;color:#c4c4c4;transform:scaleX(0.706);">1</span>
<span class="t" style="left:252.86249999999998px;transform-origin:0 50%;top:558.1px;font:normal 7px/9px 'Liberation Sans',sans-serif;color:#c4c4c4;transform:scaleX(0.706);">24</span>
<span class="t" style="left:325.7625px;transform-origin:0 50%;top:558.1px;font:normal 7px/9px 'Liberation Sans',sans-serif;color:#c4c4c4;transform:scaleX(0.706);">48</span>
<span class="t" style="left:398.66249999999997px;transform-origin:0 50%;top:558.1px;font:normal 7px/9px 'Liberation Sans',sans-serif;color:#c4c4c4;transform:scaleX(0.706);">72</span>
<span class="t" style="left:471.5625px;transform-origin:0 50%;top:558.1px;font:normal 7px/9px 'Liberation Sans',sans-serif;color:#c4c4c4;transform:scaleX(0.706);">96</span>
<span class="t" style="left:617.3625px;transform-origin:0 50%;top:558.1px;font:normal 7px/9px 'Liberation Sans',sans-serif;color:#c4c4c4;transform:scaleX(0.706);">144</span>
<span class="t" style="left:690.2624999999999px;transform-origin:0 50%;top:558.1px;font:normal 7px/9px 'Liberation Sans',sans-serif;color:#c4c4c4;transform:scaleX(0.706);">168</span>
<span class="t" style="left:763.1625px;transform-origin:0 50%;top:558.1px;font:normal 7px/9px 'Liberation Sans',sans-serif;color:#c4c4c4;transform:scaleX(0.706);">192</span>
<span class="t" style="left:836.0625px;transform-origin:0 50%;top:558.1px;font:normal 7px/9px 'Liberation Sans',sans-serif;color:#c4c4c4;transform:scaleX(0.706);">216</span>
<span class="t" style="left:908.8px;transform-origin:0 50%;top:558.1px;font:normal 7px/9px 'Liberation Sans',sans-serif;color:#c4c4c4;transform:scaleX(0.706);">2</span>
<div style="left:544px;top:569px;width:1.3px;height:10px;background:#0a0a0a"></div>
<div style="left:537.5px;top:559px;width:15px;height:10.5px;background:#0c0c0c;border:1px solid #e8e8e8;border-radius:2px"></div>
<span class="t" style="left:540px;transform-origin:0 50%;top:559.75px;font:normal 7.5px/9.5px 'Liberation Sans',sans-serif;color:#f4f4f4;transform:scaleX(0.88);">120</span>
<div style="left:913px;top:562.5px;width:21px;height:8px;background:#181818"></div>
<span class="t" style="left:915px;transform-origin:0 50%;top:561.8px;font:normal 8px/10px 'Liberation Sans',sans-serif;color:#f0f0f0;transform:scaleX(0.86);">240</span>
<span class="t" style="left:915px;transform-origin:0 50%;top:571.3px;font:normal 8px/10px 'Liberation Sans',sans-serif;color:#f0f0f0;transform:scaleX(0.86);">240</span>
<div style="left:936px;top:563px;width:14px;height:13.5px;background:linear-gradient(#606060,#4a4a4a);border:1px solid #2a2a2a;border-radius:1.5px"></div>
<svg style="left:937px;top:564px" width="12" height="12"><circle cx="4.200" cy="4.200" r="2.300" fill="none" stroke="#f4f4f4" stroke-width="1.500"/><path d="M5.800 5.800L10 10M8 8L9.300 6.800M9.300 9.300L10.500 8.200" stroke="#f4f4f4" stroke-width="1.400" fill="none"/></svg>
<div style="left:31.500000000000004px;top:19.6px;width:13.4px;height:13.4px;background:#fdbc2e;border-radius:50%"></div>
<div style="left:51.4px;top:19.6px;width:13.4px;height:13.4px;background:#27c93f;border-radius:50%"></div>
<div style="left:71.39999999999999px;top:19.6px;width:13.4px;height:13.4px;background:#ff5f57;border-radius:50%"></div>
</body></html>
